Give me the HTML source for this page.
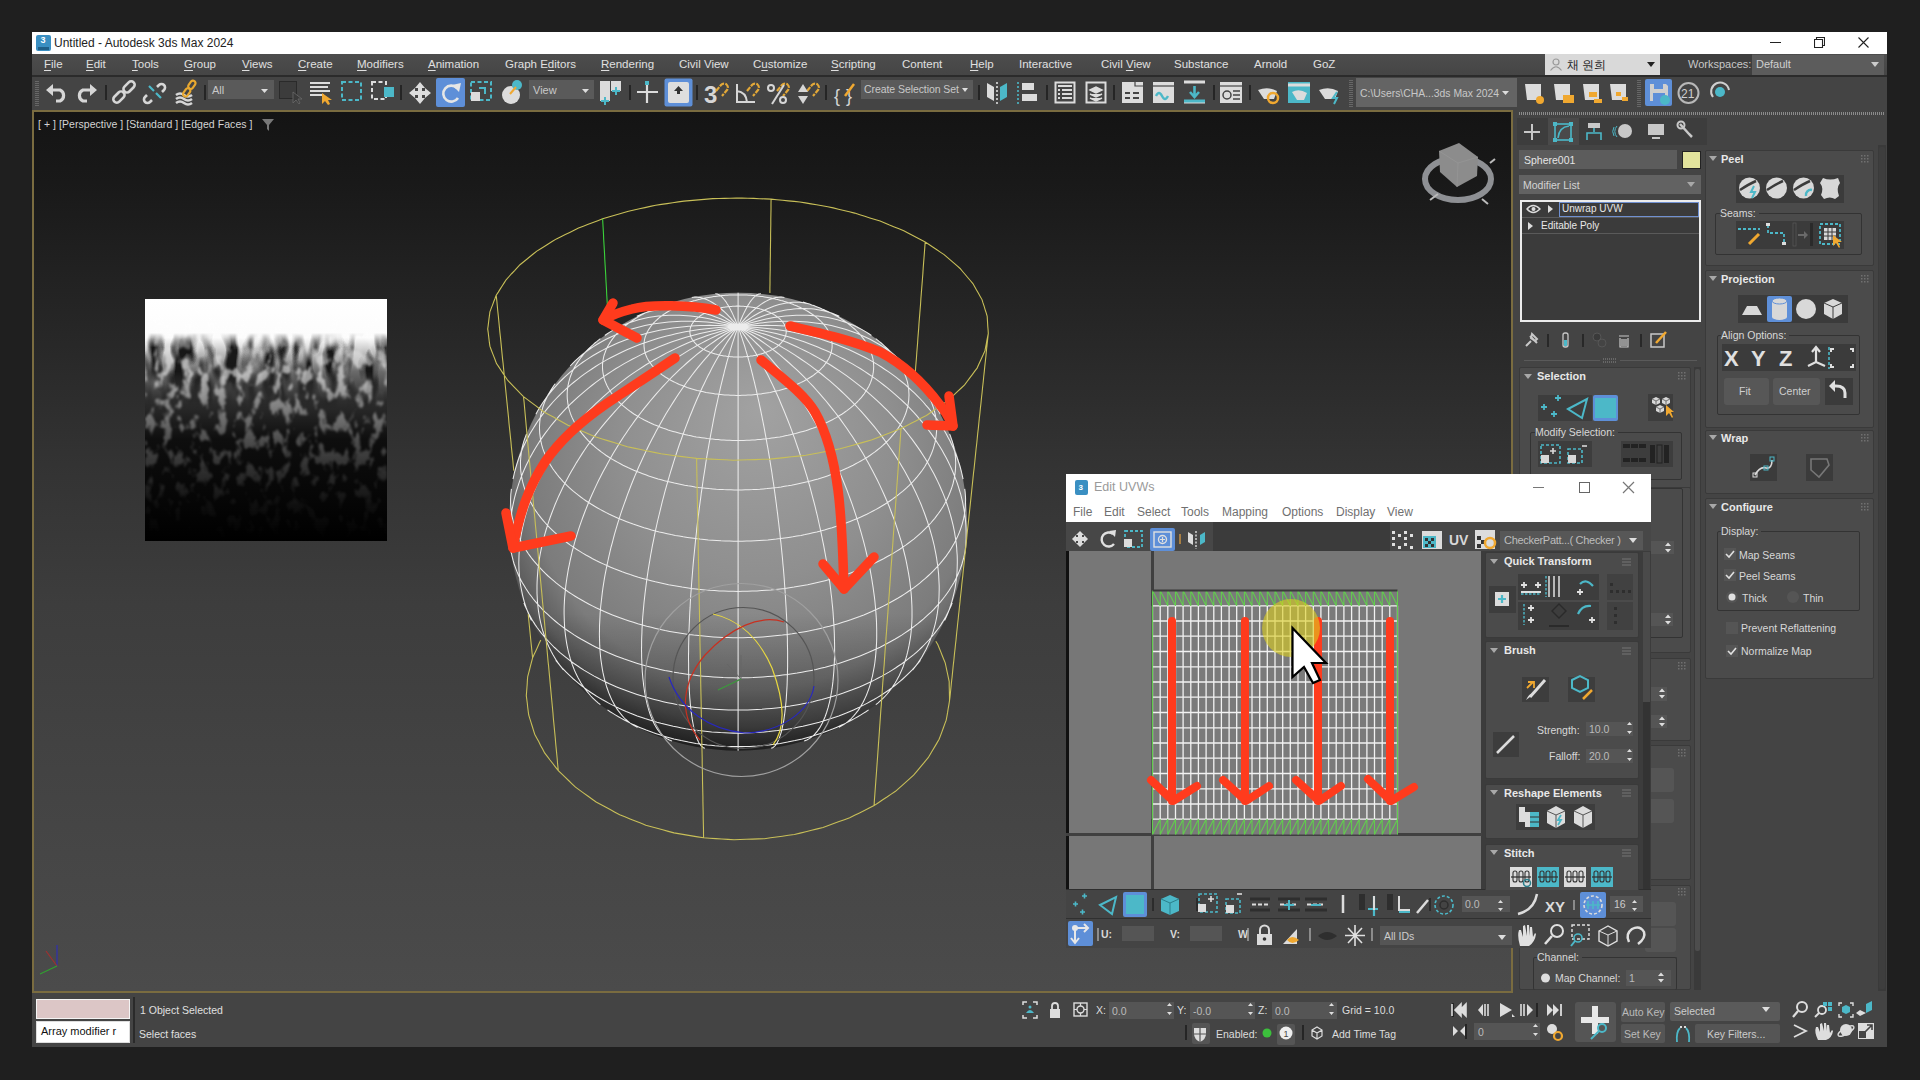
<!DOCTYPE html>
<html><head><meta charset="utf-8">
<style>
*{box-sizing:border-box;margin:0;padding:0}
html,body{width:1920px;height:1080px;overflow:hidden;background:#1f1f1f;font-family:"Liberation Sans",sans-serif;color:#dcdcdc}
.a{position:absolute}
#win{position:absolute;left:32px;top:32px;width:1855px;height:1015px;background:#444}
#title{position:absolute;left:0;top:0;width:1855px;height:22px;background:#fff;color:#222;font-size:12.5px}
#menu{position:absolute;left:0;top:22px;width:1855px;height:21px;background:linear-gradient(#4d4d4d,#454545);font-size:12px;color:#e0e0e0}
#menu span{position:absolute;top:4px;white-space:nowrap;font-size:11.5px}
#menu u{text-underline-offset:2px;text-decoration-thickness:1px}
#tb{position:absolute;left:0;top:44px;width:1855px;height:34px;background:#444}
#vp{position:absolute;left:0;top:78px;width:1481px;height:883px;border:2px solid #7a6c40;background:linear-gradient(#141414 0%,#191919 8%,#333 40%,#3d3d3d 56%,#4b4b4b 100%);overflow:hidden}
#cp{position:absolute;left:1484px;top:78px;width:371px;height:883px;background:#444}
#sb{position:absolute;left:0;top:961px;width:1855px;height:54px;background:#444}
.t{position:absolute;white-space:nowrap}
</style></head><body>
<div id="win">
  <div id="title">
    <div class="a" style="left:4px;top:3px;width:15px;height:16px;background:#3a8fc2;border-radius:2px"></div><div class="t" style="left:8.5px;top:3px;font-size:9px;font-weight:bold;color:#fff">3</div><div class="a" style="left:6px;top:15px;width:11px;height:3px;background:#1f5f88"></div>
    <div class="t" style="left:22px;top:4px;font-size:12px">Untitled - Autodesk 3ds Max 2024</div>
<div class="a" style="left:1738px;top:10px;width:11px;height:1px;background:#222"></div>
<svg class="a" style="left:1782px;top:5px" width="11" height="11"><path d="M0.5 2.5H8.5V10.5H0.5Z M2.5 2.5V0.5H10.5V8.5H8.5" fill="none" stroke="#222" stroke-width="1.1"/></svg>
<svg class="a" style="left:1826px;top:5px" width="11" height="11"><path d="M0.5 0.5L10.5 10.5M10.5 0.5L0.5 10.5" stroke="#222" stroke-width="1.1"/></svg>
  </div>
  <div id="menu">
    <span style="left:12px"><u>F</u>ile</span><span style="left:54px"><u>E</u>dit</span><span style="left:100px"><u>T</u>ools</span><span style="left:152px"><u>G</u>roup</span><span style="left:210px"><u>V</u>iews</span><span style="left:266px"><u>C</u>reate</span><span style="left:325px"><u>M</u>odifiers</span><span style="left:396px"><u>A</u>nimation</span><span style="left:473px">Graph E<u>d</u>itors</span><span style="left:569px"><u>R</u>endering</span><span style="left:647px">Civil View</span><span style="left:721px">C<u>u</u>stomize</span><span style="left:799px"><u>S</u>cripting</span><span style="left:870px">Content</span><span style="left:938px"><u>H</u>elp</span><span style="left:987px">Interactive</span><span style="left:1069px">Civil <u>V</u>iew</span><span style="left:1142px">Substance</span><span style="left:1222px">Arnold</span><span style="left:1281px">GoZ</span><div class="a" style="left:1513px;top:0;width:115px;height:21px;background:#d9d9d9"></div>
<svg class="a" style="left:1517px;top:3px" width="14" height="14"><circle cx="7" cy="5" r="3" fill="none" stroke="#999" stroke-width="1.2"/><path d="M1.5 13.5 Q7 6 12.5 13.5" fill="none" stroke="#999" stroke-width="1.2"/></svg>
<div class="t" style="left:1535px;top:3px;font-size:12px;color:#222;letter-spacing:0px">&#52292; &#50896;&#55148;</div>
<svg class="a" style="left:1615px;top:8px" width="8" height="6"><path d="M0 0H8L4 5Z" fill="#222"/></svg>
<div class="a" style="left:1628px;top:0;width:92px;height:21px;background:#3e3e3e"></div>
<div class="t" style="left:1656px;top:4px;font-size:11px;color:#c8c8c8">Workspaces:</div>
<div class="a" style="left:1720px;top:1px;width:132px;height:20px;background:#5c5c5c"></div>
<div class="t" style="left:1724px;top:4px;font-size:11px;color:#d0d0d0">Default</div>
<svg class="a" style="left:1839px;top:8px" width="8" height="6"><path d="M0 0H8L4 5Z" fill="#ccc"/></svg>
  </div>
  <div id="tb"></div>
  <div id="tbline" class="a" style="left:0;top:43px;width:1855px;height:2px;background:#2b2b2b"></div>
  <div id="vp">
<svg class="a" style="left:0;top:0" width="1477" height="879" viewBox="34 112 1477 879">
<defs>
<radialGradient id="sg" cx="0.53" cy="0.4" r="0.6" fx="0.55" fy="0.25">
<stop offset="0" stop-color="#a2a2a2"/><stop offset="0.5" stop-color="#8f8f8f"/><stop offset="0.82" stop-color="#7c7c7c"/><stop offset="0.93" stop-color="#5e5e5e"/><stop offset="1" stop-color="#3c3c3c"/>
</radialGradient>
<linearGradient id="sg2" x1="0" y1="0" x2="0" y2="1">
<stop offset="0" stop-color="#000" stop-opacity="0"/><stop offset="0.7" stop-color="#000" stop-opacity="0"/><stop offset="0.93" stop-color="#000" stop-opacity="0.35"/><stop offset="1" stop-color="#000" stop-opacity="0.5"/>
</linearGradient>
<linearGradient id="tg" x1="0" y1="0" x2="0" y2="1">
<stop offset="0" stop-color="#fff"/><stop offset="0.16" stop-color="#fcfcfc"/><stop offset="0.22" stop-color="#c0c0c0"/><stop offset="0.3" stop-color="#6a6a6a"/><stop offset="0.42" stop-color="#2e2e2e"/><stop offset="0.58" stop-color="#0e0e0e"/><stop offset="1" stop-color="#000"/>
</linearGradient>
<linearGradient id="wg" x1="0" y1="0" x2="0" y2="1">
<stop offset="0" stop-color="#fff" stop-opacity="0"/><stop offset="0.18" stop-color="#fff" stop-opacity="0.3"/><stop offset="0.3" stop-color="#fff" stop-opacity="0.65"/><stop offset="0.45" stop-color="#fff" stop-opacity="0.45"/><stop offset="0.65" stop-color="#fff" stop-opacity="0.22"/><stop offset="0.85" stop-color="#fff" stop-opacity="0.05"/><stop offset="1" stop-color="#fff" stop-opacity="0"/>
</linearGradient>
<linearGradient id="dg" x1="0" y1="0" x2="0" y2="1">
<stop offset="0" stop-color="#000" stop-opacity="0"/><stop offset="0.14" stop-color="#000" stop-opacity="0"/><stop offset="0.2" stop-color="#000" stop-opacity="0.9"/><stop offset="0.3" stop-color="#000" stop-opacity="0.8"/><stop offset="0.45" stop-color="#000" stop-opacity="0"/>
</linearGradient>
<filter id="noise" x="0" y="0" width="1" height="1" color-interpolation-filters="sRGB">
<feTurbulence type="fractalNoise" baseFrequency="0.11 0.06" numOctaves="3" seed="11" result="n"/>
<feColorMatrix in="n" type="matrix" values="0 0 0 0 1  0 0 0 0 1  0 0 0 0 1  8 0 0 0 -4.2" result="m"/>
<feGaussianBlur in="m" stdDeviation="1" result="mb"/>
<feComposite in="mb" in2="SourceGraphic" operator="in"/>
</filter>
<filter id="noise2" x="0" y="0" width="1" height="1" color-interpolation-filters="sRGB">
<feTurbulence type="fractalNoise" baseFrequency="0.08 0.03" numOctaves="2" seed="4" result="n"/>
<feColorMatrix in="n" type="matrix" values="0 0 0 0 0  0 0 0 0 0  0 0 0 0 0  4 0 0 0 -1.6" result="m"/>
<feComposite in="m" in2="SourceGraphic" operator="in"/>
</filter>
</defs>

<g>
<rect x="145" y="299" width="242" height="242" fill="url(#tg)"/>
<rect x="145" y="299" width="242" height="242" fill="url(#dg)" filter="url(#noise2)"/>
<rect x="145" y="299" width="242" height="242" fill="url(#wg)" filter="url(#noise)" opacity="0.9"/>
</g>
<circle cx="738.1" cy="521.7" r="229.0" fill="url(#sg)"/>
<circle cx="738.1" cy="521.7" r="229.0" fill="url(#sg2)"/>
<path d="M786.2 331.0 L786.2 330.5 L786.1 330.0 L786.1 329.5 L786.0 329.0 L785.9 328.5 L785.8 328.0 L785.6 327.5 L785.5 327.0 L785.3 326.5 L785.1 326.1 L784.9 325.6 L784.6 325.1 L784.4 324.6 L784.1 324.1 L783.9 323.7 L783.6 323.2 L783.2 322.7 L782.9 322.3 L782.5 321.8 L782.2 321.3 L781.8 320.9 L781.4 320.5 L781.0 320.0 L780.5 319.6 L780.1 319.1 L779.6 318.7 L779.2 318.3 L778.7 317.9 L778.1 317.5 L777.6 317.0 L777.1 316.6 L776.5 316.2 L776.0 315.9 L775.4 315.5 L774.8 315.1 L774.2 314.7 L773.5 314.4 L772.9 314.0 L772.3 313.6 L771.6 313.3 L770.9 313.0 L770.2 312.6 L769.5 312.3 L768.8 312.0 L768.1 311.7 L767.4 311.4 L766.6 311.1 L765.9 310.8 L765.1 310.5 L764.3 310.2 L763.6 310.0 L762.8 309.7 L762.0 309.5 L761.2 309.2 L760.3 309.0 L759.5 308.8 L758.7 308.6 L757.8 308.4 L757.0 308.2 L756.1 308.0 L755.3 307.8 L754.4 307.6 L753.5 307.5 L752.6 307.3 L751.8 307.2 L750.9 307.0 L750.0 306.9 L749.1 306.8 L748.2 306.7 L747.3 306.6 L746.4 306.5 L745.4 306.4 L744.5 306.4 L743.6 306.3 L742.7 306.2 L741.8 306.2 L740.8 306.2 L739.9 306.1 L739.0 306.1 L738.1 306.1 L737.1 306.1 L736.2 306.1 L735.3 306.2 L734.4 306.2 L733.5 306.2 L732.5 306.3 L731.6 306.4 L730.7 306.4 L729.8 306.5 L728.9 306.6 L728.0 306.7 L727.1 306.8 L726.2 306.9 L725.3 307.0 L724.4 307.2 L723.5 307.3 L722.6 307.5 L721.7 307.6 L720.9 307.8 L720.0 308.0 L719.2 308.2 L718.3 308.4 L717.5 308.6 L716.6 308.8 L715.8 309.0 L715.0 309.2 L714.2 309.5 L713.4 309.7 L712.6 310.0 L711.8 310.2 L711.0 310.5 L710.3 310.8 L709.5 311.1 L708.8 311.4 L708.0 311.7 L707.3 312.0 L706.6 312.3 L705.9 312.6 L705.2 313.0 L704.6 313.3 L703.9 313.6 L703.2 314.0 L702.6 314.4 L702.0 314.7 L701.4 315.1 L700.8 315.5 L700.2 315.9 L699.6 316.2 L699.1 316.6 L698.5 317.0 L698.0 317.5 L697.5 317.9 L697.0 318.3 L696.5 318.7 L696.0 319.1 L695.6 319.6 L695.2 320.0 L694.7 320.5 L694.3 320.9 L694.0 321.3 L693.6 321.8 L693.2 322.3 L692.9 322.7 L692.6 323.2 L692.3 323.7 L692.0 324.1 L691.7 324.6 L691.5 325.1 L691.3 325.6 L691.1 326.1 L690.9 326.5 L690.7 327.0 L690.5 327.5 L690.4 328.0 L690.3 328.5 L690.2 329.0 L690.1 329.5 L690.0 330.0 L690.0 330.5 L689.9 331.0 L689.9 331.5 L689.9 332.0 L689.9 332.5 L690.0 333.0 L690.0 333.5 L690.1 334.0 L690.2 334.5 L690.3 335.0 L690.5 335.5 L690.6 336.0 L690.8 336.5 L691.0 337.0 L691.2 337.5 L691.4 337.9 L691.7 338.4 L692.0 338.9 L692.2 339.4 L692.5 339.9 L692.9 340.3 L693.2 340.8 L693.6 341.3 L693.9 341.7 L694.3 342.2 L694.7 342.7 L695.2 343.1 L695.6 343.6 L696.1 344.0 L696.5 344.4 L697.0 344.9 L697.5 345.3 L698.1 345.7 L698.6 346.1 L699.2 346.6 L699.7 347.0 L700.3 347.4 L700.9 347.8 L701.5 348.1 L702.2 348.5 L702.8 348.9 L703.5 349.3 L704.2 349.6 L704.8 350.0 L705.5 350.3 L706.3 350.7 L707.0 351.0 L707.7 351.3 L708.5 351.6 L709.3 351.9 L710.0 352.2 L710.8 352.5 L711.6 352.8 L712.4 353.1 L713.2 353.4 L714.1 353.6 L714.9 353.9 L715.8 354.1 L716.6 354.3 L717.5 354.6 L718.4 354.8 L719.3 355.0 L720.2 355.2 L721.1 355.4 L722.0 355.5 L722.9 355.7 L723.8 355.9 L724.7 356.0 L725.6 356.1 L726.6 356.3 L727.5 356.4 L728.5 356.5 L729.4 356.6 L730.4 356.7 L731.3 356.8 L732.3 356.8 L733.2 356.9 L734.2 356.9 L735.2 357.0 L736.1 357.0 L737.1 357.0 L738.1 357.0 L739.0 357.0 L740.0 357.0 L741.0 357.0 L741.9 356.9 L742.9 356.9 L743.9 356.8 L744.8 356.8 L745.8 356.7 L746.7 356.6 L747.7 356.5 L748.6 356.4 L749.6 356.3 L750.5 356.1 L751.4 356.0 L752.4 355.9 L753.3 355.7 L754.2 355.5 L755.1 355.4 L756.0 355.2 L756.9 355.0 L757.8 354.8 L758.6 354.6 L759.5 354.3 L760.4 354.1 L761.2 353.9 L762.1 353.6 L762.9 353.4 L763.7 353.1 L764.5 352.8 L765.3 352.5 L766.1 352.2 L766.9 351.9 L767.7 351.6 L768.4 351.3 L769.2 351.0 L769.9 350.7 L770.6 350.3 L771.3 350.0 L772.0 349.6 L772.7 349.3 L773.3 348.9 L774.0 348.5 L774.6 348.1 L775.2 347.8 L775.8 347.4 L776.4 347.0 L777.0 346.6 L777.5 346.1 L778.1 345.7 L778.6 345.3 L779.1 344.9 L779.6 344.4 L780.1 344.0 L780.5 343.6 L781.0 343.1 L781.4 342.7 L781.8 342.2 L782.2 341.7 L782.6 341.3 L782.9 340.8 L783.3 340.3 L783.6 339.9 L783.9 339.4 L784.2 338.9 L784.4 338.4 L784.7 337.9 L784.9 337.5 L785.1 337.0 L785.3 336.5 L785.5 336.0 L785.7 335.5 L785.8 335.0 L785.9 334.5 L786.0 334.0 L786.1 333.5 L786.2 333.0 L786.2 332.5 L786.2 332.0 L786.2 331.5 L786.2 331.0M832.0 343.0 L831.9 342.0 L831.8 341.0 L831.6 340.0 L831.4 339.0 L831.2 338.1 L830.9 337.1 L830.6 336.1 L830.3 335.2 L829.9 334.2 L829.5 333.3 L829.0 332.3 L828.5 331.4 L828.0 330.4 L827.5 329.5 L826.9 328.6 L826.3 327.7 L825.6 326.8 L824.9 325.9 L824.2 325.0 L823.5 324.1 L822.7 323.2 L821.9 322.3 L821.1 321.5 L820.2 320.6 L819.3 319.8 L818.4 319.0 L817.4 318.2 L816.4 317.3 L815.4 316.5 L814.4 315.8 L813.3 315.0 L812.2 314.2 L811.1 313.5 L809.9 312.7 L808.8 312.0 L807.6 311.3 L806.4 310.6 L805.1 309.9 L803.8 309.2 L802.5 308.6 L801.2 307.9 L799.9 307.3 L798.5 306.7 L797.2 306.1 L795.8 305.5 L794.3 304.9 L792.9 304.3 L791.4 303.8 L790.0 303.2 L788.5 302.7 L787.0 302.2 L785.4 301.7 L783.9 301.3 L782.3 300.8 L780.7 300.4 L779.1 299.9 L777.5 299.5 L775.9 299.2 L774.3 298.8 L772.6 298.4 L771.0 298.1 L769.3 297.8 L767.6 297.5 L766.0 297.2 L764.3 296.9 L762.6 296.6 L760.8 296.4 L759.1 296.2 L757.4 296.0 L755.7 295.8 L753.9 295.6 L752.2 295.5 L750.4 295.3 L748.7 295.2 L746.9 295.1 L745.1 295.0 L743.4 295.0 L741.6 294.9 L739.8 294.9 L738.1 294.9 L736.3 294.9 L734.5 294.9 L732.8 295.0 L731.0 295.0 L729.2 295.1 L727.5 295.2 L725.7 295.3 L724.0 295.5 L722.2 295.6 L720.5 295.8 L718.7 296.0 L717.0 296.2 L715.3 296.4 L713.6 296.6 L711.9 296.9 L710.2 297.2 L708.5 297.5 L706.8 297.8 L705.1 298.1 L703.5 298.4 L701.8 298.8 L700.2 299.2 L698.6 299.5 L697.0 299.9 L695.4 300.4 L693.8 300.8 L692.3 301.3 L690.7 301.7 L689.2 302.2 L687.7 302.7 L686.2 303.2 L684.7 303.8 L683.2 304.3 L681.8 304.9 L680.4 305.5 L679.0 306.1 L677.6 306.7 L676.2 307.3 L674.9 307.9 L673.6 308.6 L672.3 309.2 L671.0 309.9 L669.8 310.6 L668.6 311.3 L667.4 312.0 L666.2 312.7 L665.1 313.5 L663.9 314.2 L662.8 315.0 L661.8 315.8 L660.7 316.5 L659.7 317.3 L658.7 318.2 L657.8 319.0 L656.9 319.8 L656.0 320.6 L655.1 321.5 L654.3 322.3 L653.4 323.2 L652.7 324.1 L651.9 325.0 L651.2 325.9 L650.5 326.8 L649.9 327.7 L649.3 328.6 L648.7 329.5 L648.1 330.4 L647.6 331.4 L647.1 332.3 L646.7 333.3 L646.3 334.2 L645.9 335.2 L645.5 336.1 L645.2 337.1 L644.9 338.1 L644.7 339.0 L644.5 340.0 L644.3 341.0 L644.2 342.0 L644.1 343.0 L644.0 344.0 L644.0 344.9 L644.0 345.9 L644.1 346.9 L644.2 347.9 L644.3 348.9 L644.4 349.9 L644.6 350.9 L644.9 351.8 L645.1 352.8 L645.4 353.8 L645.8 354.8 L646.1 355.8 L646.6 356.7 L647.0 357.7 L647.5 358.7 L648.0 359.6 L648.6 360.6 L649.2 361.5 L649.8 362.5 L650.5 363.4 L651.2 364.3 L651.9 365.3 L652.7 366.2 L653.5 367.1 L654.3 368.0 L655.2 368.9 L656.1 369.8 L657.0 370.6 L658.0 371.5 L659.0 372.4 L660.1 373.2 L661.1 374.0 L662.2 374.9 L663.4 375.7 L664.5 376.5 L665.7 377.3 L667.0 378.0 L668.2 378.8 L669.5 379.5 L670.8 380.3 L672.2 381.0 L673.6 381.7 L675.0 382.4 L676.4 383.1 L677.8 383.7 L679.3 384.4 L680.8 385.0 L682.4 385.6 L683.9 386.2 L685.5 386.8 L687.1 387.4 L688.7 387.9 L690.4 388.4 L692.0 388.9 L693.7 389.4 L695.4 389.9 L697.1 390.4 L698.9 390.8 L700.6 391.2 L702.4 391.6 L704.2 392.0 L706.0 392.4 L707.8 392.7 L709.6 393.0 L711.5 393.3 L713.3 393.6 L715.2 393.9 L717.0 394.1 L718.9 394.3 L720.8 394.5 L722.7 394.7 L724.6 394.9 L726.5 395.0 L728.4 395.1 L730.4 395.2 L732.3 395.3 L734.2 395.3 L736.1 395.4 L738.1 395.4 L740.0 395.4 L741.9 395.3 L743.9 395.3 L745.8 395.2 L747.7 395.1 L749.6 395.0 L751.5 394.9 L753.4 394.7 L755.3 394.5 L757.2 394.3 L759.1 394.1 L761.0 393.9 L762.8 393.6 L764.7 393.3 L766.5 393.0 L768.4 392.7 L770.2 392.4 L772.0 392.0 L773.8 391.6 L775.5 391.2 L777.3 390.8 L779.0 390.4 L780.7 389.9 L782.4 389.4 L784.1 388.9 L785.8 388.4 L787.4 387.9 L789.1 387.4 L790.7 386.8 L792.2 386.2 L793.8 385.6 L795.3 385.0 L796.8 384.4 L798.3 383.7 L799.8 383.1 L801.2 382.4 L802.6 381.7 L804.0 381.0 L805.3 380.3 L806.6 379.5 L807.9 378.8 L809.2 378.0 L810.4 377.3 L811.6 376.5 L812.8 375.7 L813.9 374.9 L815.0 374.0 L816.1 373.2 L817.1 372.4 L818.1 371.5 L819.1 370.6 L820.1 369.8 L821.0 368.9 L821.8 368.0 L822.7 367.1 L823.5 366.2 L824.3 365.3 L825.0 364.3 L825.7 363.4 L826.4 362.5 L827.0 361.5 L827.6 360.6 L828.1 359.6 L828.7 358.7 L829.1 357.7 L829.6 356.7 L830.0 355.8 L830.4 354.8 L830.7 353.8 L831.0 352.8 L831.3 351.8 L831.5 350.9 L831.7 349.9 L831.9 348.9 L832.0 347.9 L832.1 346.9 L832.1 345.9 L832.1 344.9 L832.1 344.0 L832.0 343.0M873.4 362.1 L873.2 360.7 L873.0 359.3 L872.7 357.8 L872.3 356.4 L871.9 355.0 L871.5 353.6 L871.0 352.2 L870.4 350.8 L869.8 349.4 L869.2 348.0 L868.5 346.6 L867.8 345.3 L867.0 343.9 L866.1 342.6 L865.3 341.2 L864.3 339.9 L863.4 338.6 L862.3 337.3 L861.3 336.0 L860.2 334.7 L859.0 333.4 L857.8 332.2 L856.6 331.0 L855.3 329.7 L854.0 328.5 L852.6 327.3 L851.2 326.2 L849.8 325.0 L848.3 323.9 L846.8 322.7 L845.3 321.6 L843.7 320.5 L842.0 319.5 L840.4 318.4 L838.7 317.4 L837.0 316.3 L835.2 315.3 L833.4 314.3 L831.6 313.4 L829.7 312.4 L827.8 311.5 L825.9 310.6 L824.0 309.7 L822.0 308.9 L820.0 308.0 L817.9 307.2 L815.9 306.4 L813.8 305.6 L811.7 304.9 L809.5 304.1 L807.4 303.4 L805.2 302.7 L803.0 302.1M673.1 302.1 L670.9 302.7 L668.8 303.4 L666.6 304.1 L664.5 304.9 L662.4 305.6 L660.3 306.4 L658.2 307.2 L656.2 308.0 L654.2 308.9 L652.2 309.7 L650.2 310.6 L648.3 311.5 L646.4 312.4 L644.6 313.4 L642.7 314.3 L640.9 315.3 L639.2 316.3 L637.4 317.4 L635.8 318.4 L634.1 319.5 L632.5 320.5 L630.9 321.6 L629.3 322.7 L627.8 323.9 L626.3 325.0 L624.9 326.2 L623.5 327.3 L622.1 328.5 L620.8 329.7 L619.5 331.0 L618.3 332.2 L617.1 333.4 L616.0 334.7 L614.9 336.0 L613.8 337.3 L612.8 338.6 L611.8 339.9 L610.9 341.2 L610.0 342.6 L609.2 343.9 L608.4 345.3 L607.6 346.6 L606.9 348.0 L606.3 349.4 L605.7 350.8 L605.2 352.2 L604.7 353.6 L604.2 355.0 L603.8 356.4 L603.5 357.8 L603.2 359.3 L602.9 360.7 L602.8 362.1 L602.6 363.6 L602.5 365.0 L602.5 366.5 L602.5 367.9 L602.6 369.4 L602.7 370.8 L602.9 372.3 L603.1 373.7 L603.4 375.2 L603.7 376.6 L604.1 378.1 L604.5 379.5 L605.0 381.0 L605.6 382.4 L606.2 383.8 L606.8 385.3 L607.6 386.7 L608.3 388.1 L609.1 389.5 L610.0 390.9 L610.9 392.3 L611.9 393.7 L612.9 395.1 L614.0 396.4 L615.1 397.8 L616.3 399.1 L617.5 400.5 L618.8 401.8 L620.1 403.1 L621.5 404.4 L622.9 405.7 L624.4 406.9 L626.0 408.2 L627.5 409.4 L629.2 410.6 L630.8 411.8 L632.5 413.0 L634.3 414.2 L636.1 415.3 L638.0 416.4 L639.9 417.6 L641.8 418.6 L643.8 419.7 L645.8 420.7 L647.9 421.8 L650.0 422.8 L652.1 423.7 L654.3 424.7 L656.5 425.6 L658.8 426.5 L661.1 427.4 L663.4 428.3 L665.8 429.1 L668.1 429.9 L670.6 430.7 L673.0 431.4 L675.5 432.1 L678.0 432.8 L680.6 433.5 L683.1 434.1 L685.7 434.7 L688.3 435.3 L691.0 435.8 L693.6 436.4 L696.3 436.9 L699.0 437.3 L701.7 437.7 L704.4 438.1 L707.2 438.5 L710.0 438.8 L712.7 439.1 L715.5 439.4 L718.3 439.6 L721.1 439.9 L723.9 440.0 L726.8 440.2 L729.6 440.3 L732.4 440.4 L735.2 440.4 L738.1 440.4 L740.9 440.4 L743.7 440.4 L746.6 440.3 L749.4 440.2 L752.2 440.0 L755.0 439.9 L757.8 439.6 L760.6 439.4 L763.4 439.1 L766.2 438.8 L769.0 438.5 L771.7 438.1 L774.4 437.7 L777.1 437.3 L779.8 436.9 L782.5 436.4 L785.2 435.8 L787.8 435.3 L790.4 434.7 L793.0 434.1 L795.6 433.5 L798.1 432.8 L800.6 432.1 L803.1 431.4 L805.6 430.7 L808.0 429.9 L810.4 429.1 L812.7 428.3 L815.1 427.4 L817.4 426.5 L819.6 425.6 L821.8 424.7 L824.0 423.7 L826.2 422.8 L828.3 421.8 L830.3 420.7 L832.4 419.7 L834.3 418.6 L836.3 417.6 L838.2 416.4 L840.0 415.3 L841.8 414.2 L843.6 413.0 L845.3 411.8 L847.0 410.6 L848.6 409.4 L850.2 408.2 L851.7 406.9 L853.2 405.7 L854.6 404.4 L856.0 403.1 L857.3 401.8 L858.6 400.5 L859.8 399.1 L861.0 397.8 L862.2 396.4 L863.2 395.1 L864.3 393.7 L865.2 392.3 L866.1 390.9 L867.0 389.5 L867.8 388.1 L868.6 386.7 L869.3 385.3 L870.0 383.8 L870.6 382.4 L871.1 381.0 L871.6 379.5 L872.0 378.1 L872.4 376.6 L872.8 375.2 L873.0 373.7 L873.3 372.3 L873.4 370.8 L873.6 369.4 L873.6 367.9 L873.7 366.5 L873.6 365.0 L873.5 363.6 L873.4 362.1M908.4 387.5 L908.1 385.6 L907.8 383.8 L907.4 381.9 L906.9 380.1 L906.3 378.3 L905.7 376.5 L905.0 374.7 L904.3 372.9 L903.5 371.1 L902.6 369.3 L901.7 367.6 L900.8 365.8 L899.7 364.1 L898.6 362.4 L897.5 360.7 L896.3 359.0 L895.0 357.3 L893.7 355.7 L892.3 354.0 L890.9 352.4 L889.4 350.8 L887.9 349.2 L886.3 347.6 L884.6 346.1 L883.0 344.6 L881.2 343.0 L879.4 341.6 L877.6 340.1 L875.7 338.6M600.4 338.6 L598.5 340.1 L596.7 341.6 L594.9 343.0 L593.2 344.6 L591.5 346.1 L589.9 347.6 L588.3 349.2 L586.7 350.8 L585.3 352.4 L583.8 354.0 L582.5 355.7 L581.1 357.3 L579.9 359.0 L578.7 360.7 L577.5 362.4 L576.4 364.1 L575.4 365.8 L574.4 367.6 L573.5 369.3 L572.6 371.1 L571.8 372.9 L571.1 374.7 L570.4 376.5 L569.8 378.3 L569.3 380.1 L568.8 381.9 L568.4 383.8 L568.0 385.6 L567.7 387.5 L567.5 389.3 L567.3 391.2 L567.2 393.1 L567.2 394.9 L567.2 396.8 L567.3 398.7 L567.5 400.5 L567.7 402.4 L568.0 404.3 L568.4 406.2 L568.8 408.1 L569.3 409.9 L569.9 411.8 L570.5 413.7 L571.2 415.5 L572.0 417.4 L572.9 419.2 L573.8 421.1 L574.7 422.9 L575.8 424.7 L576.9 426.5 L578.1 428.3 L579.3 430.1 L580.7 431.9 L582.0 433.7 L583.5 435.4 L585.0 437.2 L586.6 438.9 L588.2 440.6 L590.0 442.3 L591.7 444.0 L593.6 445.7 L595.5 447.3 L597.4 448.9 L599.5 450.5 L601.6 452.1 L603.7 453.6 L605.9 455.2 L608.2 456.7 L610.5 458.2 L612.9 459.6 L615.3 461.0 L617.8 462.4 L620.4 463.8 L623.0 465.2 L625.7 466.5 L628.4 467.8 L631.1 469.0 L633.9 470.3 L636.8 471.5 L639.7 472.6 L642.7 473.7 L645.7 474.8 L648.7 475.9 L651.8 476.9 L654.9 477.9 L658.1 478.9 L661.3 479.8 L664.5 480.7 L667.8 481.5 L671.1 482.3 L674.4 483.1 L677.8 483.8 L681.2 484.5 L684.6 485.2 L688.0 485.8 L691.5 486.3 L695.0 486.9 L698.5 487.4 L702.1 487.8 L705.6 488.2 L709.2 488.6 L712.8 488.9 L716.4 489.2 L720.0 489.4 L723.6 489.6 L727.2 489.7 L730.8 489.8 L734.4 489.9 L738.1 489.9 L741.7 489.9 L745.3 489.8 L749.0 489.7 L752.6 489.6 L756.2 489.4 L759.8 489.2 L763.4 488.9 L767.0 488.6 L770.5 488.2 L774.1 487.8 L777.6 487.4 L781.1 486.9 L784.6 486.3 L788.1 485.8 L791.5 485.2 L795.0 484.5 L798.4 483.8 L801.7 483.1 L805.1 482.3 L808.4 481.5 L811.6 480.7 L814.9 479.8 L818.1 478.9 L821.2 477.9 L824.4 476.9 L827.4 475.9 L830.5 474.8 L833.5 473.7 L836.4 472.6 L839.3 471.5 L842.2 470.3 L845.0 469.0 L847.8 467.8 L850.5 466.5 L853.1 465.2 L855.7 463.8 L858.3 462.4 L860.8 461.0 L863.2 459.6 L865.6 458.2 L868.0 456.7 L870.2 455.2 L872.4 453.6 L874.6 452.1 L876.7 450.5 L878.7 448.9 L880.7 447.3 L882.6 445.7 L884.4 444.0 L886.2 442.3 L887.9 440.6 L889.6 438.9 L891.1 437.2 L892.6 435.4 L894.1 433.7 L895.5 431.9 L896.8 430.1 L898.1 428.3 L899.2 426.5 L900.3 424.7 L901.4 422.9 L902.4 421.1 L903.3 419.2 L904.1 417.4 L904.9 415.5 L905.6 413.7 L906.3 411.8 L906.8 409.9 L907.3 408.1 L907.8 406.2 L908.1 404.3 L908.4 402.4 L908.7 400.5 L908.8 398.7 L908.9 396.8 L909.0 394.9 L908.9 393.1 L908.8 391.2 L908.7 389.3 L908.4 387.5M935.8 417.6 L935.4 415.4 L934.9 413.2 L934.4 411.0 L933.8 408.9 L933.1 406.7 L932.3 404.5 L931.5 402.4 L930.6 400.3 L929.7 398.2 L928.6 396.1 L927.5 394.0 L926.3 391.9 L925.1 389.9 L923.8 387.9 L922.4 385.8 L921.0 383.8M555.2 383.8 L553.7 385.8 L552.4 387.9 L551.1 389.9 L549.8 391.9 L548.6 394.0 L547.5 396.1 L546.5 398.2 L545.5 400.3 L544.6 402.4 L543.8 404.5 L543.0 406.7 L542.4 408.9 L541.7 411.0 L541.2 413.2 L540.7 415.4 L540.3 417.6 L540.0 419.8 L539.8 422.0 L539.6 424.3 L539.5 426.5 L539.5 428.7 L539.6 430.9 L539.7 433.2 L540.0 435.4 L540.3 437.7 L540.6 439.9 L541.1 442.2 L541.6 444.4 L542.2 446.6 L542.9 448.9 L543.7 451.1 L544.6 453.3 L545.5 455.5 L546.5 457.7 L547.6 459.9 L548.8 462.1 L550.0 464.3 L551.4 466.5 L552.8 468.7 L554.3 470.8 L555.9 472.9 L557.5 475.0 L559.2 477.1 L561.0 479.2 L562.9 481.3 L564.9 483.3 L566.9 485.4 L569.0 487.4 L571.2 489.3 L573.5 491.3 L575.8 493.2 L578.3 495.1 L580.7 497.0 L583.3 498.9 L585.9 500.7 L588.6 502.5 L591.4 504.3 L594.2 506.0 L597.1 507.7 L600.1 509.4 L603.1 511.0 L606.2 512.6 L609.4 514.2 L612.6 515.7 L615.9 517.2 L619.2 518.7 L622.6 520.1 L626.1 521.4 L629.6 522.8 L633.1 524.1 L636.7 525.3 L640.4 526.5 L644.1 527.7 L647.8 528.8 L651.6 529.9 L655.4 530.9 L659.3 531.9 L663.2 532.8 L667.2 533.7 L671.2 534.6 L675.2 535.4 L679.2 536.1 L683.3 536.8 L687.4 537.4 L691.6 538.0 L695.7 538.6 L699.9 539.1 L704.1 539.5 L708.3 539.9 L712.5 540.2 L716.8 540.5 L721.0 540.8 L725.3 541.0 L729.5 541.1 L733.8 541.2 L738.1 541.2 L742.3 541.2 L746.6 541.1 L750.9 541.0 L755.1 540.8 L759.4 540.5 L763.6 540.2 L767.9 539.9 L772.1 539.5 L776.3 539.1 L780.4 538.6 L784.6 538.0 L788.7 537.4 L792.8 536.8 L796.9 536.1 L801.0 535.4 L805.0 534.6 L809.0 533.7 L812.9 532.8 L816.8 531.9 L820.7 530.9 L824.5 529.9 L828.3 528.8 L832.1 527.7 L835.8 526.5 L839.4 525.3 L843.0 524.1 L846.6 522.8 L850.1 521.4 L853.5 520.1 L856.9 518.7 L860.3 517.2 L863.5 515.7 L866.8 514.2 L869.9 512.6 L873.0 511.0 L876.1 509.4 L879.0 507.7 L881.9 506.0 L884.8 504.3 L887.5 502.5 L890.2 500.7 L892.8 498.9 L895.4 497.0 L897.9 495.1 L900.3 493.2 L902.6 491.3 L904.9 489.3 L907.1 487.4 L909.2 485.4 L911.2 483.3 L913.2 481.3 L915.1 479.2 L916.9 477.1 L918.6 475.0 L920.3 472.9 L921.9 470.8 L923.3 468.7 L924.8 466.5 L926.1 464.3 L927.4 462.1 L928.5 459.9 L929.6 457.7 L930.6 455.5 L931.6 453.3 L932.4 451.1 L933.2 448.9 L933.9 446.6 L934.5 444.4 L935.1 442.2 L935.5 439.9 L935.9 437.7 L936.2 435.4 L936.4 433.2 L936.6 430.9 L936.6 428.7 L936.6 426.5 L936.5 424.3 L936.4 422.0 L936.1 419.8 L935.8 417.6M954.6 451.0 L954.1 448.6 L953.6 446.1 L952.9 443.6 L952.2 441.2 L951.4 438.8 L950.6 436.4 L949.6 434.0M526.5 434.0 L525.6 436.4 L524.7 438.8 L523.9 441.2 L523.2 443.6 L522.6 446.1 L522.0 448.6 L521.6 451.0 L521.2 453.5 L520.9 456.0 L520.7 458.5 L520.5 461.0 L520.5 463.5 L520.5 466.1 L520.6 468.6 L520.8 471.1 L521.1 473.6 L521.5 476.2 L522.0 478.7 L522.5 481.2 L523.2 483.8 L523.9 486.3 L524.7 488.8 L525.6 491.3 L526.6 493.8 L527.7 496.3 L528.9 498.8 L530.1 501.3 L531.5 503.8 L532.9 506.2 L534.4 508.7 L536.0 511.1 L537.7 513.5 L539.5 515.9 L541.4 518.3 L543.3 520.7 L545.4 523.0 L547.5 525.3 L549.7 527.6 L552.0 529.9 L554.4 532.2 L556.9 534.4 L559.4 536.6 L562.0 538.8 L564.7 540.9 L567.5 543.0 L570.4 545.1 L573.4 547.1 L576.4 549.2 L579.5 551.1 L582.7 553.1 L585.9 555.0 L589.2 556.8 L592.6 558.7 L596.1 560.5 L599.6 562.2 L603.2 563.9 L606.9 565.6 L610.6 567.2 L614.4 568.8 L618.3 570.3 L622.2 571.8 L626.2 573.2 L630.2 574.6 L634.3 575.9 L638.4 577.2 L642.6 578.4 L646.8 579.6 L651.1 580.7 L655.4 581.8 L659.8 582.8 L664.2 583.8 L668.6 584.7 L673.1 585.5 L677.6 586.3 L682.1 587.1 L686.7 587.7 L691.3 588.4 L695.9 588.9 L700.5 589.4 L705.2 589.9 L709.8 590.3 L714.5 590.6 L719.2 590.9 L723.9 591.1 L728.6 591.2 L733.3 591.3 L738.1 591.4 L742.8 591.3 L747.5 591.2 L752.2 591.1 L756.9 590.9 L761.6 590.6 L766.3 590.3 L771.0 589.9 L775.6 589.4 L780.3 588.9 L784.9 588.4 L789.5 587.7 L794.0 587.1 L798.6 586.3 L803.1 585.5 L807.6 584.7 L812.0 583.8 L816.4 582.8 L820.7 581.8 L825.1 580.7 L829.3 579.6 L833.6 578.4 L837.7 577.2 L841.9 575.9 L846.0 574.6 L850.0 573.2 L853.9 571.8 L857.9 570.3 L861.7 568.8 L865.5 567.2 L869.2 565.6 L872.9 563.9 L876.5 562.2 L880.0 560.5 L883.5 558.7 L886.9 556.8 L890.2 555.0 L893.5 553.1 L896.7 551.1 L899.8 549.2 L902.8 547.1 L905.7 545.1 L908.6 543.0 L911.4 540.9 L914.1 538.8 L916.7 536.6 L919.3 534.4 L921.8 532.2 L924.1 529.9 L926.4 527.6 L928.6 525.3 L930.8 523.0 L932.8 520.7 L934.8 518.3 L936.6 515.9 L938.4 513.5 L940.1 511.1 L941.7 508.7 L943.3 506.2 L944.7 503.8 L946.0 501.3 L947.3 498.8 L948.5 496.3 L949.5 493.8 L950.5 491.3 L951.4 488.8 L952.2 486.3 L953.0 483.8 L953.6 481.2 L954.2 478.7 L954.6 476.2 L955.0 473.6 L955.3 471.1 L955.5 468.6 L955.6 466.1 L955.7 463.5 L955.6 461.0 L955.5 458.5 L955.3 456.0 L955.0 453.5 L954.6 451.0M511.4 488.9 L511.1 491.6 L510.8 494.3 L510.7 497.0 L510.6 499.7 L510.6 502.4 L510.7 505.1 L510.9 507.8 L511.2 510.5 L511.6 513.2 L512.0 516.0 L512.6 518.7 L513.2 521.4 L514.0 524.1 L514.8 526.8 L515.7 529.6 L516.7 532.3 L517.9 534.9 L519.1 537.6 L520.4 540.3 L521.7 543.0 L523.2 545.6 L524.8 548.3 L526.5 550.9 L528.2 553.5 L530.1 556.1 L532.0 558.7 L534.0 561.2 L536.2 563.7 L538.4 566.2 L540.7 568.7 L543.1 571.2 L545.6 573.6 L548.1 576.0 L550.8 578.4 L553.5 580.7 L556.4 583.1 L559.3 585.3 L562.3 587.6 L565.4 589.8 L568.5 592.0 L571.8 594.1 L575.1 596.2 L578.5 598.3 L582.0 600.3 L585.5 602.3 L589.1 604.2 L592.8 606.1 L596.6 608.0 L600.4 609.7 L604.3 611.5 L608.3 613.2 L612.4 614.9 L616.5 616.5 L620.6 618.0 L624.8 619.5 L629.1 620.9 L633.4 622.3 L637.8 623.7 L642.3 624.9 L646.7 626.2 L651.3 627.3 L655.8 628.4 L660.5 629.5 L665.1 630.5 L669.8 631.4 L674.5 632.2 L679.3 633.0 L684.1 633.8 L688.9 634.5 L693.7 635.1 L698.6 635.6 L703.5 636.1 L708.4 636.5 L713.3 636.9 L718.3 637.2 L723.2 637.4 L728.2 637.6 L733.1 637.7 L738.1 637.7 L743.0 637.7 L748.0 637.6 L752.9 637.4 L757.9 637.2 L762.8 636.9 L767.7 636.5 L772.6 636.1 L777.5 635.6 L782.4 635.1 L787.2 634.5 L792.1 633.8 L796.8 633.0 L801.6 632.2 L806.3 631.4 L811.0 630.5 L815.7 629.5 L820.3 628.4 L824.9 627.3 L829.4 626.2 L833.9 624.9 L838.3 623.7 L842.7 622.3 L847.0 620.9 L851.3 619.5 L855.5 618.0 L859.7 616.5 L863.8 614.9 L867.8 613.2 L871.8 611.5 L875.7 609.7 L879.5 608.0 L883.3 606.1 L887.0 604.2 L890.6 602.3 L894.2 600.3 L897.7 598.3 L901.1 596.2 L904.4 594.1 L907.6 592.0 L910.8 589.8 L913.9 587.6 L916.9 585.3 L919.8 583.1 L922.6 580.7 L925.4 578.4 L928.0 576.0 L930.6 573.6 L933.1 571.2 L935.5 568.7 L937.8 566.2 L940.0 563.7 L942.1 561.2 L944.1 558.7 L946.1 556.1 L947.9 553.5 L949.7 550.9 L951.3 548.3 L952.9 545.6 L954.4 543.0 L955.8 540.3 L957.1 537.6 L958.3 534.9 L959.4 532.3 L960.4 529.6 L961.3 526.8 L962.2 524.1 L962.9 521.4 L963.6 518.7 L964.1 516.0 L964.6 513.2 L965.0 510.5 L965.2 507.8 L965.4 505.1 L965.5 502.4 L965.6 499.7 L965.5 497.0 L965.3 494.3 L965.1 491.6 L964.7 488.9M510.4 546.7 L510.8 549.5 L511.3 552.3 L511.8 555.1 L512.5 557.9 L513.2 560.7 L514.0 563.5 L515.0 566.3 L516.0 569.1 L517.1 571.9 L518.3 574.7 L519.6 577.4 L521.0 580.2 L522.5 582.9 L524.1 585.6 L525.7 588.3 L527.5 591.0 L529.3 593.7 L531.3 596.3 L533.3 599.0 L535.5 601.6 L537.7 604.2 L540.0 606.7 L542.4 609.3 L544.9 611.8 L547.5 614.2 L550.1 616.7 L552.9 619.1 L555.7 621.5 L558.6 623.9 L561.6 626.2 L564.7 628.5 L567.9 630.7 L571.2 632.9 L574.5 635.1 L577.9 637.2 L581.4 639.3 L585.0 641.3 L588.6 643.3 L592.3 645.3 L596.1 647.2 L599.9 649.0 L603.9 650.8 L607.8 652.6 L611.9 654.3 L616.0 655.9 L620.2 657.5 L624.4 659.1 L628.7 660.6 L633.1 662.0 L637.5 663.4 L641.9 664.7 L646.4 666.0 L651.0 667.2 L655.5 668.3 L660.2 669.4 L664.8 670.4 L669.6 671.3 L674.3 672.2 L679.1 673.1 L683.9 673.8 L688.7 674.5 L693.6 675.1 L698.5 675.7 L703.4 676.2 L708.3 676.6 L713.2 677.0 L718.2 677.3 L723.1 677.6 L728.1 677.7 L733.1 677.8 L738.1 677.9 L743.0 677.8 L748.0 677.7 L753.0 677.6 L758.0 677.3 L762.9 677.0 L767.8 676.6 L772.8 676.2 L777.7 675.7 L782.6 675.1 L787.4 674.5 L792.3 673.8 L797.1 673.1 L801.8 672.2 L806.6 671.3 L811.3 670.4 L816.0 669.4 L820.6 668.3 L825.2 667.2 L829.7 666.0 L834.2 664.7 L838.7 663.4 L843.1 662.0 L847.4 660.6 L851.7 659.1 L856.0 657.5 L860.1 655.9 L864.2 654.3 L868.3 652.6 L872.3 650.8 L876.2 649.0 L880.1 647.2 L883.8 645.3 L887.5 643.3 L891.2 641.3 L894.8 639.3 L898.2 637.2 L901.7 635.1 L905.0 632.9 L908.2 630.7 L911.4 628.5 L914.5 626.2 L917.5 623.9 L920.4 621.5 L923.3 619.1 L926.0 616.7 L928.7 614.2 L931.3 611.8 L933.8 609.3 L936.2 606.7 L938.5 604.2 L940.7 601.6 L942.8 599.0 L944.9 596.3 L946.8 593.7 L948.7 591.0 L950.4 588.3 L952.1 585.6 L953.7 582.9 L955.1 580.2 L956.5 577.4 L957.8 574.7 L959.0 571.9 L960.2 569.1 L961.2 566.3 L962.1 563.5 L962.9 560.7 L963.7 557.9 L964.3 555.1 L964.9 552.3 L965.3 549.5 L965.7 546.7M523.9 602.9 L525.0 605.7 L526.2 608.4 L527.5 611.1 L528.8 613.8 L530.3 616.5 L531.8 619.2 L533.4 621.9 L535.1 624.6 L536.9 627.2 L538.8 629.8 L540.8 632.4 L542.9 635.0 L545.0 637.5 L547.3 640.0 L549.6 642.5 L552.0 645.0 L554.5 647.5 L557.1 649.9 L559.7 652.3 L562.5 654.6 L565.3 656.9 L568.2 659.2 L571.2 661.5 L574.3 663.7 L577.4 665.8 L580.6 668.0 L583.9 670.1 L587.3 672.1 L590.7 674.1 L594.2 676.1 L597.8 678.0 L601.4 679.9 L605.2 681.7 L608.9 683.5 L612.8 685.2 L616.7 686.9 L620.6 688.5 L624.7 690.1 L628.7 691.6 L632.9 693.1 L637.1 694.5 L641.3 695.8 L645.6 697.1 L649.9 698.3 L654.3 699.5 L658.7 700.6 L663.2 701.7 L667.7 702.7 L672.2 703.6 L676.7 704.5 L681.3 705.3 L686.0 706.1 L690.6 706.8 L695.3 707.4 L700.0 707.9 L704.7 708.4 L709.4 708.8 L714.2 709.2 L719.0 709.5 L723.7 709.7 L728.5 709.9 L733.3 710.0 L738.1 710.0 L742.9 710.0 L747.6 709.9 L752.4 709.7 L757.2 709.5 L762.0 709.2 L766.7 708.8 L771.4 708.4 L776.2 707.9 L780.8 707.4 L785.5 706.8 L790.2 706.1 L794.8 705.3 L799.4 704.5 L804.0 703.6 L808.5 702.7 L813.0 701.7 L817.4 700.6 L821.9 699.5 L826.2 698.3 L830.6 697.1 L834.8 695.8 L839.1 694.5 L843.3 693.1 L847.4 691.6 L851.5 690.1 L855.5 688.5 L859.5 686.9 L863.4 685.2 L867.2 683.5 L871.0 681.7 L874.7 679.9 L878.3 678.0 L881.9 676.1 L885.4 674.1 L888.9 672.1 L892.2 670.1 L895.5 668.0 L898.7 665.8 L901.9 663.7 L904.9 661.5 L907.9 659.2 L910.8 656.9 L913.7 654.6 L916.4 652.3 L919.1 649.9 L921.6 647.5 L924.1 645.0 L926.5 642.5 L928.9 640.0 L931.1 637.5 L933.3 635.0 L935.3 632.4 L937.3 629.8 L939.2 627.2 L941.0 624.6 L942.7 621.9 L944.3 619.2 L945.9 616.5 L947.3 613.8 L948.7 611.1 L949.9 608.4 L951.1 605.7 L952.2 602.9M555.8 660.3 L557.7 662.7 L559.7 665.1 L561.8 667.5 L564.0 669.8 L566.2 672.2 L568.5 674.4 L570.9 676.7 L573.4 679.0 L576.0 681.2 L578.6 683.3 L581.3 685.5 L584.1 687.6 L586.9 689.7 L589.8 691.7 L592.8 693.7 L595.9 695.7 L599.0 697.6 L602.2 699.5 L605.4 701.3 L608.7 703.1 L612.1 704.9 L615.5 706.6 L619.0 708.3 L622.6 709.9 L626.2 711.5 L629.9 713.0 L633.6 714.4 L637.3 715.9 L641.2 717.2 L645.0 718.6 L648.9 719.8 L652.9 721.0 L656.9 722.2 L660.9 723.3 L665.0 724.3 L669.1 725.3 L673.2 726.3 L677.4 727.1 L681.6 727.9 L685.8 728.7 L690.1 729.4 L694.4 730.0 L698.7 730.6 L703.0 731.1 L707.4 731.6 L711.7 732.0 L716.1 732.3 L720.5 732.6 L724.9 732.8 L729.3 733.0 L733.7 733.1 L738.1 733.1 L742.5 733.1 L746.9 733.0 L751.3 732.8 L755.7 732.6 L760.1 732.3 L764.4 732.0 L768.8 731.6 L773.1 731.1 L777.5 730.6 L781.8 730.0 L786.0 729.4 L790.3 728.7 L794.5 727.9 L798.7 727.1 L802.9 726.3 L807.1 725.3 L811.2 724.3 L815.2 723.3 L819.3 722.2 L823.3 721.0 L827.2 719.8 L831.1 718.6 L835.0 717.2 L838.8 715.9 L842.6 714.4 L846.3 713.0 L849.9 711.5 L853.6 709.9 L857.1 708.3 L860.6 706.6 L864.0 704.9 L867.4 703.1 L870.7 701.3 L874.0 699.5 L877.2 697.6 L880.3 695.7 L883.3 693.7 L886.3 691.7 L889.2 689.7 L892.1 687.6 L894.8 685.5 L897.5 683.3 L900.2 681.2 L902.7 679.0 L905.2 676.7 L907.6 674.4 L909.9 672.2 L912.2 669.8 L914.3 667.5 L916.4 665.1 L918.5 662.7 L920.4 660.3M607.5 709.9 L610.2 711.7 L612.9 713.4 L615.7 715.1 L618.5 716.8 L621.4 718.4 L624.3 720.0 L627.3 721.6 L630.3 723.1 L633.4 724.6 L636.5 726.0 L639.7 727.4 L643.0 728.8 L646.2 730.1 L649.5 731.3 L652.9 732.6 L656.3 733.7 L659.8 734.8 L663.2 735.9 L666.7 736.9 L670.3 737.9 L673.9 738.9 L677.5 739.7 L681.1 740.6 L684.8 741.3 L688.5 742.1 L692.2 742.7 L696.0 743.4 L699.7 743.9 L703.5 744.4 L707.3 744.9 L711.1 745.3 L714.9 745.7 L718.8 746.0 L722.6 746.2 L726.5 746.4 L730.3 746.5 L734.2 746.6 L738.1 746.6 L741.9 746.6 L745.8 746.5 L749.7 746.4 L753.5 746.2 L757.4 746.0 L761.2 745.7 L765.0 745.3 L768.8 744.9 L772.6 744.4 L776.4 743.9 L780.2 743.4 L783.9 742.7 L787.6 742.1 L791.3 741.3 L795.0 740.6 L798.7 739.7 L802.3 738.9 L805.8 737.9 L809.4 736.9 L812.9 735.9 L816.4 734.8 L819.8 733.7 L823.2 732.6 L826.6 731.3 L829.9 730.1 L833.2 728.8 L836.4 727.4 L839.6 726.0 L842.7 724.6 L845.8 723.1 L848.9 721.6 L851.8 720.0 L854.8 718.4 L857.7 716.8 L860.5 715.1 L863.2 713.4 L865.9 711.7 L868.6 709.9M963.1 479.1 L962.3 475.6 L961.5 472.0 L960.6 468.5 L959.6 465.0 L958.4 461.5 L957.2 458.0 L956.0 454.5 L954.6 451.0 L953.1 447.6 L951.5 444.2 L949.9 440.8 L948.1 437.4 L946.3 434.0 L944.4 430.7 L942.4 427.4 L940.3 424.1 L938.1 420.8 L935.8 417.6 L933.4 414.4 L931.0 411.3 L928.5 408.1 L925.8 405.1 L923.2 402.0 L920.4 399.0 L917.5 396.1 L914.6 393.2 L911.5 390.3 L908.4 387.5 L905.3 384.7 L902.0 382.0 L898.7 379.3 L895.3 376.7 L891.8 374.1 L888.3 371.6 L884.6 369.2 L881.0 366.8 L877.2 364.4 L873.4 362.1 L869.5 359.9 L865.6 357.8 L861.6 355.7 L857.5 353.7 L853.4 351.7 L849.2 349.8 L845.0 348.0 L840.7 346.3 L836.4 344.6 L832.0 343.0 L827.6 341.4 L823.2 340.0 L818.7 338.6 L814.1 337.3 L809.6 336.0 L805.0 334.9 L800.3 333.8 L795.6 332.8 L790.9 331.8 L786.2 331.0 L781.5 330.2 L776.7 329.5 L771.9 328.9 L767.1 328.4 L762.3 328.0 L757.5 327.6 L752.6 327.3 L747.8 327.1 L742.9 327.0 L738.1 326.9M940.3 414.2 L938.5 411.1 L936.7 408.0 L934.8 405.0 L932.8 402.0 L930.8 399.0 L928.6 396.1 L926.4 393.2 L924.1 390.4 L921.7 387.6 L919.2 384.8 L916.6 382.1 L914.0 379.5 L911.3 376.8 L908.5 374.3 L905.6 371.8 L902.6 369.3 L899.6 366.9 L896.5 364.6 L893.3 362.3 L890.1 360.1 L886.8 357.9 L883.4 355.8 L880.0 353.8 L876.4 351.8 L872.8 349.9 L869.2 348.0 L865.5 346.2 L861.7 344.5 L857.9 342.8 L854.0 341.3 L850.0 339.7 L846.0 338.3 L842.0 336.9 L837.8 335.6 L833.7 334.4 L829.5 333.3 L825.2 332.2 L820.9 331.2 L816.6 330.3 L812.2 329.4 L807.7 328.7 L803.3 328.0 L798.8 327.4 L794.2 326.9 L789.7 326.4 L785.1 326.1 L780.5 325.8 L775.8 325.6 L771.2 325.5 L766.5 325.4 L761.8 325.5 L757.1 325.6 L752.3 325.8 L747.6 326.1 L742.8 326.5 L738.1 326.9M906.0 366.0 L903.7 363.6 L901.2 361.2 L898.8 358.9 L896.2 356.7 L893.6 354.5 L890.9 352.4 L888.1 350.3 L885.3 348.3 L882.4 346.4 L879.4 344.5 L876.3 342.7 L873.2 341.0 L870.1 339.3 L866.8 337.7 L863.5 336.2 L860.2 334.7 L856.8 333.3 L853.3 332.0 L849.7 330.7 L846.1 329.6 L842.5 328.5 L838.8 327.4 L835.0 326.5 L831.2 325.6 L827.4 324.8 L823.5 324.1 L819.5 323.5 L815.5 322.9 L811.5 322.4 L807.4 322.0 L803.3 321.7 L799.1 321.5 L795.0 321.3 L790.7 321.2 L786.5 321.3 L782.2 321.3 L777.9 321.5 L773.5 321.8 L769.2 322.1 L764.8 322.6 L760.4 323.1 L755.9 323.7 L751.5 324.4 L747.0 325.1 L742.6 326.0 L738.1 326.9M871.4 335.5 L868.9 333.8 L866.3 332.1 L863.7 330.6 L861.1 329.1 L858.3 327.7 L855.5 326.3 L852.7 325.1 L849.8 323.9 L846.8 322.7 L843.8 321.7 L840.7 320.7 L837.6 319.8 L834.4 319.0 L831.2 318.3 L827.9 317.6 L824.6 317.0 L821.2 316.5 L817.8 316.1 L814.4 315.8 L810.9 315.5 L807.3 315.3 L803.7 315.3 L800.1 315.3 L796.4 315.3 L792.7 315.5 L789.0 315.8 L785.2 316.1 L781.4 316.5 L777.6 317.0 L773.8 317.6 L769.9 318.3 L766.0 319.1 L762.0 320.0 L758.1 320.9 L754.1 321.9 L750.1 323.1 L746.1 324.3 L742.1 325.6 L738.1 326.9M839.3 316.3 L837.0 315.2 L834.6 314.2 L832.2 313.3 L829.7 312.4 L827.2 311.7 L824.6 311.0 L822.0 310.4 L819.4 309.9 L816.7 309.5 L813.9 309.1 L811.1 308.8 L808.3 308.7 L805.4 308.6 L802.5 308.6 L799.6 308.6 L796.6 308.8 L793.6 309.1 L790.6 309.4 L787.5 309.8 L784.4 310.3 L781.2 310.9 L778.0 311.6 L774.8 312.4 L771.6 313.3 L768.3 314.3 L765.0 315.3 L761.7 316.5 L758.4 317.7 L755.1 319.0 L751.7 320.4 L748.3 321.9 L744.9 323.5 L741.5 325.2 L738.1 326.9M809.5 304.1 L807.6 303.6 L805.6 303.2 L803.6 302.8 L801.5 302.5 L799.4 302.3 L797.3 302.2 L795.1 302.2 L792.9 302.3 L790.7 302.5 L788.5 302.7 L786.2 303.1 L783.9 303.5 L781.5 304.0 L779.1 304.6 L776.7 305.3 L774.3 306.1 L771.8 307.0 L769.4 308.0 L766.9 309.1 L764.3 310.2 L761.8 311.5 L759.2 312.8 L756.6 314.3 L754.0 315.8 L751.4 317.4 L748.8 319.2 L746.1 321.0 L743.4 322.9 L740.8 324.9 L738.1 326.9M784.4 297.4 L783.0 297.2 L781.6 297.1 L780.1 297.1 L778.7 297.2 L777.2 297.4 L775.7 297.6 L774.2 298.0 L772.6 298.4 L771.1 299.0 L769.5 299.6 L767.9 300.3 L766.3 301.1 L764.6 302.0 L763.0 303.0 L761.3 304.1 L759.6 305.3 L757.9 306.6 L756.1 308.0 L754.4 309.5 L752.6 311.0 L750.8 312.7 L749.0 314.4 L747.2 316.3 L745.4 318.2 L743.6 320.3 L741.8 322.4 L739.9 324.6 L738.1 326.9M760.9 293.8 L760.2 293.8 L759.5 293.9 L758.7 294.1 L758.0 294.4 L757.2 294.8 L756.4 295.2 L755.7 295.8 L754.9 296.4 L754.1 297.2 L753.2 298.0 L752.4 299.0 L751.6 300.0 L750.7 301.1 L749.9 302.3 L749.0 303.7 L748.1 305.1 L747.3 306.6 L746.4 308.2 L745.5 309.9 L744.6 311.7 L743.7 313.6 L742.7 315.6 L741.8 317.7 L740.9 319.8 L740.0 322.1 L739.0 324.5 L738.1 326.9M738.1 292.7 L738.1 292.7 L738.1 292.8 L738.1 293.1 L738.1 293.4 L738.1 293.8 L738.1 294.3 L738.1 294.9 L738.1 295.6 L738.1 296.4 L738.1 297.3 L738.1 298.2 L738.1 299.3 L738.1 300.5 L738.1 301.8 L738.1 303.1 L738.1 304.6 L738.1 306.1 L738.1 307.8 L738.1 309.5 L738.1 311.4 L738.1 313.3 L738.1 315.3 L738.1 317.5 L738.1 319.7 L738.1 322.0 L738.1 324.4 L738.1 326.9M715.3 293.8 L716.0 293.8 L716.7 293.9 L717.4 294.1 L718.2 294.4 L718.9 294.8 L719.7 295.2 L720.5 295.8 L721.3 296.4 L722.1 297.2 L722.9 298.0 L723.7 299.0 L724.6 300.0 L725.4 301.1 L726.3 302.3 L727.1 303.7 L728.0 305.1 L728.9 306.6 L729.8 308.2 L730.7 309.9 L731.6 311.7 L732.5 313.6 L733.4 315.6 L734.3 317.7 L735.3 319.8 L736.2 322.1 L737.1 324.5 L738.1 326.9M691.8 297.4 L693.2 297.2 L694.6 297.1 L696.0 297.1 L697.5 297.2 L698.9 297.4 L700.4 297.6 L702.0 298.0 L703.5 298.4 L705.1 299.0 L706.6 299.6 L708.2 300.3 L709.9 301.1 L711.5 302.0 L713.2 303.0 L714.9 304.1 L716.6 305.3 L718.3 306.6 L720.0 308.0 L721.8 309.5 L723.5 311.0 L725.3 312.7 L727.1 314.4 L728.9 316.3 L730.7 318.2 L732.5 320.3 L734.4 322.4 L736.2 324.6 L738.1 326.9M666.6 304.1 L668.5 303.6 L670.5 303.2 L672.6 302.8 L674.6 302.5 L676.7 302.3 L678.8 302.2 L681.0 302.2 L683.2 302.3 L685.4 302.5 L687.7 302.7 L690.0 303.1 L692.3 303.5 L694.6 304.0 L697.0 304.6 L699.4 305.3 L701.8 306.1 L704.3 307.0 L706.8 308.0 L709.3 309.1 L711.8 310.2 L714.4 311.5 L716.9 312.8 L719.5 314.3 L722.1 315.8 L724.7 317.4 L727.4 319.2 L730.0 321.0 L732.7 322.9 L735.4 324.9 L738.1 326.9M636.8 316.3 L639.2 315.2 L641.5 314.2 L644.0 313.3 L646.4 312.4 L648.9 311.7 L651.5 311.0 L654.1 310.4 L656.8 309.9 L659.5 309.5 L662.2 309.1 L665.0 308.8 L667.8 308.7 L670.7 308.6 L673.6 308.6 L676.5 308.6 L679.5 308.8 L682.5 309.1 L685.6 309.4 L688.7 309.8 L691.8 310.3 L694.9 310.9 L698.1 311.6 L701.3 312.4 L704.6 313.3 L707.8 314.3 L711.1 315.3 L714.4 316.5 L717.7 317.7 L721.1 319.0 L724.4 320.4 L727.8 321.9 L731.2 323.5 L734.6 325.2 L738.1 326.9M604.8 335.5 L607.3 333.8 L609.8 332.1 L612.4 330.6 L615.1 329.1 L617.8 327.7 L620.6 326.3 L623.5 325.1 L626.4 323.9 L629.3 322.7 L632.3 321.7 L635.4 320.7 L638.5 319.8 L641.7 319.0 L644.9 318.3 L648.2 317.6 L651.5 317.0 L654.9 316.5 L658.3 316.1 L661.8 315.8 L665.3 315.5 L668.8 315.3 L672.4 315.3 L676.0 315.3 L679.7 315.3 L683.4 315.5 L687.1 315.8 L690.9 316.1 L694.7 316.5 L698.5 317.0 L702.4 317.6 L706.3 318.3 L710.2 319.1 L714.1 320.0 L718.1 320.9 L722.0 321.9 L726.0 323.1 L730.0 324.3 L734.0 325.6 L738.1 326.9M570.2 366.0 L572.5 363.6 L574.9 361.2 L577.4 358.9 L579.9 356.7 L582.6 354.5 L585.3 352.4 L588.0 350.3 L590.9 348.3 L593.8 346.4 L596.8 344.5 L599.8 342.7 L602.9 341.0 L606.1 339.3 L609.3 337.7 L612.6 336.2 L616.0 334.7 L619.4 333.3 L622.9 332.0 L626.4 330.7 L630.0 329.6 L633.6 328.5 L637.3 327.4 L641.1 326.5 L644.9 325.6 L648.8 324.8 L652.7 324.1 L656.6 323.5 L660.6 322.9 L664.6 322.4 L668.7 322.0 L672.8 321.7 L677.0 321.5 L681.2 321.3 L685.4 321.2 L689.7 321.3 L694.0 321.3 L698.3 321.5 L702.6 321.8 L707.0 322.1 L711.4 322.6 L715.8 323.1 L720.2 323.7 L724.7 324.4 L729.1 325.1 L733.6 326.0 L738.1 326.9M535.9 414.2 L537.6 411.1 L539.4 408.0 L541.3 405.0 L543.3 402.0 L545.4 399.0 L547.5 396.1 L549.8 393.2 L552.1 390.4 L554.5 387.6 L557.0 384.8 L559.5 382.1 L562.2 379.5 L564.9 376.8 L567.7 374.3 L570.5 371.8 L573.5 369.3 L576.5 366.9 L579.6 364.6 L582.8 362.3 L586.0 360.1 L589.4 357.9 L592.7 355.8 L596.2 353.8 L599.7 351.8 L603.3 349.9 L606.9 348.0 L610.7 346.2 L614.4 344.5 L618.3 342.8 L622.2 341.3 L626.1 339.7 L630.1 338.3 L634.2 336.9 L638.3 335.6 L642.5 334.4 L646.7 333.3 L650.9 332.2 L655.2 331.2 L659.6 330.3 L664.0 329.4 L668.4 328.7 L672.9 328.0 L677.4 327.4 L681.9 326.9 L686.5 326.4 L691.1 326.1 L695.7 325.8 L700.3 325.6 L705.0 325.5 L709.7 325.4 L714.4 325.5 L719.1 325.6 L723.8 325.8 L728.6 326.1 L733.3 326.5 L738.1 326.9M513.0 479.1 L513.8 475.6 L514.6 472.0 L515.6 468.5 L516.6 465.0 L517.7 461.5 L518.9 458.0 L520.2 454.5 L521.6 451.0 L523.0 447.6 L524.6 444.2 L526.3 440.8 L528.0 437.4 L529.8 434.0 L531.8 430.7 L533.8 427.4 L535.9 424.1 L538.1 420.8 L540.3 417.6 L542.7 414.4 L545.1 411.3 L547.7 408.1 L550.3 405.1 L553.0 402.0 L555.8 399.0 L558.6 396.1 L561.6 393.2 L564.6 390.3 L567.7 387.5 L570.9 384.7 L574.1 382.0 L577.5 379.3 L580.9 376.7 L584.3 374.1 L587.9 371.6 L591.5 369.2 L595.2 366.8 L598.9 364.4 L602.8 362.1 L606.6 359.9 L610.6 357.8 L614.6 355.7 L618.6 353.7 L622.7 351.7 L626.9 349.8 L631.1 348.0 L635.4 346.3 L639.7 344.6 L644.1 343.0 L648.5 341.4 L653.0 340.0 L657.5 338.6 L662.0 337.3 L666.6 336.0 L671.2 334.9 L675.8 333.8 L680.5 332.8 L685.2 331.8 L689.9 331.0 L694.7 330.2 L699.4 329.5 L704.2 328.9 L709.0 328.4 L713.8 328.0 L718.7 327.6 L723.5 327.3 L728.4 327.1 L733.2 327.0 L738.1 326.9M511.2 553.1 L510.8 549.5 L510.5 546.0 L510.2 542.4 L510.1 538.8 L510.0 535.2 L510.0 531.6 L510.2 527.9 L510.4 524.3 L510.7 520.6 L511.1 516.9 L511.6 513.2 L512.1 509.6 L512.8 505.8 L513.6 502.1 L514.4 498.4 L515.4 494.7 L516.4 491.0 L517.6 487.3 L518.8 483.6 L520.1 479.9 L521.5 476.2 L523.0 472.5 L524.6 468.8 L526.3 465.1 L528.1 461.5 L529.9 457.8 L531.9 454.2 L534.0 450.6 L536.1 447.0 L538.3 443.5 L540.6 439.9 L543.0 436.4 L545.5 432.9 L548.1 429.5 L550.7 426.0 L553.5 422.6 L556.3 419.3 L559.2 415.9 L562.2 412.6 L565.2 409.4 L568.4 406.2 L571.6 403.0 L574.9 399.9 L578.2 396.8 L581.7 393.8 L585.2 390.8 L588.8 387.9 L592.4 385.0 L596.1 382.1 L599.9 379.4 L603.7 376.6 L607.6 374.0 L611.6 371.4 L615.6 368.8 L619.7 366.4 L623.8 363.9 L627.9 361.6 L632.2 359.3 L636.4 357.1 L640.8 354.9 L645.1 352.8 L649.5 350.8 L654.0 348.9 L658.4 347.0 L663.0 345.2 L667.5 343.5 L672.1 341.8 L676.7 340.2 L681.3 338.7 L686.0 337.3 L690.6 336.0 L695.3 334.7 L700.0 333.5 L704.8 332.4 L709.5 331.4 L714.3 330.4 L719.0 329.6 L723.8 328.8 L728.5 328.1 L733.3 327.5 L738.1 326.9M531.4 620.4 L530.0 617.4 L528.7 614.3 L527.5 611.1 L526.3 608.0 L525.2 604.7 L524.2 601.5 L523.3 598.1 L522.5 594.8 L521.8 591.4 L521.1 588.0 L520.5 584.5 L520.0 581.0 L519.6 577.4 L519.3 573.8 L519.0 570.2 L518.9 566.6 L518.8 562.9 L518.9 559.2 L519.0 555.5 L519.2 551.7 L519.5 547.9 L519.9 544.1 L520.4 540.3 L520.9 536.5 L521.6 532.6 L522.3 528.7 L523.2 524.8 L524.1 520.9 L525.1 517.0 L526.2 513.1 L527.4 509.2 L528.7 505.2 L530.1 501.3 L531.6 497.4 L533.1 493.4 L534.8 489.5 L536.5 485.5 L538.4 481.6 L540.3 477.7 L542.3 473.8 L544.4 469.9 L546.5 466.0 L548.8 462.1 L551.1 458.3 L553.6 454.5 L556.1 450.6 L558.6 446.9 L561.3 443.1 L564.1 439.4 L566.9 435.7 L569.8 432.0 L572.7 428.3 L575.8 424.7 L578.9 421.1 L582.1 417.6 L585.4 414.1 L588.7 410.7 L592.1 407.3 L595.5 403.9 L599.1 400.6 L602.6 397.3 L606.3 394.1 L610.0 390.9 L613.8 387.8 L617.6 384.8 L621.4 381.8 L625.3 378.8 L629.3 375.9 L633.3 373.1 L637.4 370.4 L641.5 367.7 L645.6 365.0 L649.8 362.5 L654.0 360.0 L658.2 357.6 L662.5 355.2 L666.8 352.9 L671.2 350.7 L675.5 348.6 L679.9 346.5 L684.3 344.5 L688.8 342.6 L693.2 340.8 L697.7 339.1 L702.1 337.4 L706.6 335.8 L711.1 334.3 L715.6 332.9 L720.1 331.5 L724.6 330.2 L729.1 329.1 L733.6 327.9 L738.1 326.9M563.4 669.8 L561.5 667.5 L559.7 665.1 L557.9 662.6 L556.2 660.1 L554.6 657.5 L553.0 654.8 L551.5 652.1 L550.1 649.3 L548.7 646.4 L547.4 643.5 L546.2 640.5 L545.0 637.5 L544.0 634.4 L542.9 631.3 L542.0 628.1 L541.2 624.8 L540.4 621.5 L539.7 618.1 L539.1 614.7 L538.5 611.2 L538.1 607.7 L537.7 604.2 L537.4 600.6 L537.2 596.9 L537.0 593.2 L537.0 589.5 L537.0 585.7 L537.1 581.9 L537.3 578.0 L537.6 574.1 L537.9 570.2 L538.4 566.2 L538.9 562.3 L539.5 558.2 L540.2 554.2 L541.0 550.1 L541.9 546.0 L542.8 541.9 L543.9 537.8 L545.0 533.7 L546.2 529.5 L547.5 525.3 L548.9 521.2 L550.3 517.0 L551.9 512.8 L553.5 508.6 L555.2 504.3 L557.0 500.1 L558.8 495.9 L560.8 491.7 L562.8 487.5 L564.9 483.3 L567.1 479.2 L569.3 475.0 L571.7 470.8 L574.1 466.7 L576.5 462.6 L579.1 458.5 L581.7 454.4 L584.4 450.3 L587.1 446.3 L590.0 442.3 L592.8 438.4 L595.8 434.4 L598.8 430.5 L601.9 426.7 L605.0 422.8 L608.2 419.1 L611.5 415.3 L614.8 411.6 L618.1 408.0 L621.5 404.4 L625.0 400.8 L628.5 397.4 L632.0 393.9 L635.6 390.5 L639.3 387.2 L642.9 383.9 L646.7 380.7 L650.4 377.6 L654.2 374.5 L658.0 371.5 L661.9 368.6 L665.7 365.7 L669.6 362.9 L673.6 360.2 L677.5 357.5 L681.5 354.9 L685.5 352.4 L689.5 349.9 L693.5 347.6 L697.5 345.3 L701.6 343.1 L705.6 341.0 L709.7 338.9 L713.7 337.0 L717.8 335.1 L721.9 333.3 L725.9 331.6 L730.0 329.9 L734.0 328.4 L738.1 326.9M600.4 704.7 L598.4 703.1 L596.4 701.4 L594.5 699.7 L592.6 697.9 L590.8 696.0 L589.1 694.0 L587.3 691.9 L585.7 689.8 L584.1 687.6 L582.5 685.3 L581.0 683.0 L579.6 680.5 L578.2 678.0 L576.9 675.4 L575.6 672.8 L574.4 670.1 L573.3 667.3 L572.2 664.4 L571.2 661.5 L570.2 658.4 L569.4 655.4 L568.5 652.2 L567.8 649.0 L567.1 645.7 L566.5 642.4 L566.0 639.0 L565.5 635.6 L565.1 632.0 L564.7 628.5 L564.5 624.8 L564.3 621.1 L564.2 617.4 L564.1 613.6 L564.1 609.7 L564.2 605.8 L564.4 601.9 L564.6 597.9 L565.0 593.9 L565.4 589.8 L565.8 585.7 L566.4 581.5 L567.0 577.3 L567.7 573.1 L568.4 568.9 L569.3 564.6 L570.2 560.2 L571.2 555.9 L572.2 551.5 L573.4 547.1 L574.6 542.7 L575.8 538.3 L577.2 533.9 L578.6 529.4 L580.1 524.9 L581.7 520.4 L583.3 516.0 L585.0 511.5 L586.8 507.0 L588.6 502.5 L590.5 498.0 L592.5 493.5 L594.5 489.1 L596.6 484.6 L598.8 480.1 L601.0 475.7 L603.3 471.3 L605.7 466.9 L608.1 462.5 L610.5 458.2 L613.0 453.8 L615.6 449.5 L618.2 445.3 L620.9 441.0 L623.6 436.8 L626.4 432.7 L629.2 428.5 L632.1 424.5 L635.0 420.4 L638.0 416.4 L641.0 412.5 L644.0 408.6 L647.1 404.8 L650.2 401.0 L653.3 397.3 L656.5 393.6 L659.7 390.0 L663.0 386.4 L666.2 383.0 L669.5 379.5 L672.8 376.2 L676.2 372.9 L679.5 369.7 L682.9 366.6 L686.3 363.5 L689.7 360.5 L693.1 357.6 L696.6 354.7 L700.0 352.0 L703.5 349.3 L706.9 346.7 L710.4 344.1 L713.9 341.7 L717.3 339.3 L720.8 337.0 L724.3 334.8 L727.7 332.7 L731.2 330.7 L734.6 328.8 L738.1 326.9M637.3 727.3 L635.5 726.4 L633.7 725.4 L632.0 724.3 L630.3 723.1 L628.7 721.8 L627.1 720.5 L625.5 719.1 L623.9 717.5 L622.4 715.9 L621.0 714.2 L619.6 712.4 L618.2 710.6 L616.8 708.6 L615.5 706.6 L614.3 704.5 L613.1 702.3 L611.9 700.0 L610.8 697.6 L609.8 695.2 L608.7 692.6 L607.8 690.0 L606.8 687.3 L606.0 684.6 L605.2 681.7 L604.4 678.8 L603.7 675.8 L603.0 672.7 L602.4 669.5 L601.9 666.3 L601.4 663.0 L600.9 659.6 L600.5 656.1 L600.2 652.6 L599.9 649.0 L599.7 645.4 L599.6 641.7 L599.5 637.9 L599.4 634.0 L599.5 630.1 L599.5 626.2 L599.7 622.1 L599.9 618.1 L600.1 613.9 L600.4 609.7 L600.8 605.5 L601.3 601.2 L601.8 596.9 L602.3 592.6 L602.9 588.1 L603.6 583.7 L604.3 579.2 L605.1 574.7 L606.0 570.1 L606.9 565.6 L607.9 561.0 L608.9 556.3 L610.0 551.7 L611.1 547.0 L612.4 542.3 L613.6 537.6 L614.9 532.9 L616.3 528.1 L617.7 523.4 L619.2 518.7 L620.7 513.9 L622.3 509.2 L624.0 504.4 L625.7 499.7 L627.4 494.9 L629.2 490.2 L631.0 485.5 L632.9 480.8 L634.8 476.1 L636.8 471.5 L638.8 466.8 L640.9 462.2 L643.0 457.6 L645.1 453.1 L647.3 448.6 L649.5 444.1 L651.8 439.6 L654.1 435.2 L656.4 430.8 L658.8 426.5 L661.2 422.2 L663.6 418.0 L666.0 413.8 L668.5 409.7 L671.0 405.7 L673.6 401.6 L676.1 397.7 L678.7 393.8 L681.3 390.0 L683.9 386.2 L686.5 382.5 L689.2 378.9 L691.9 375.3 L694.5 371.9 L697.2 368.4 L699.9 365.1 L702.6 361.8 L705.4 358.7 L708.1 355.6 L710.8 352.5 L713.6 349.6 L716.3 346.7 L719.0 344.0 L721.8 341.3 L724.5 338.7 L727.2 336.1 L729.9 333.7 L732.7 331.4 L735.4 329.1 L738.1 326.9M672.0 741.0 L670.6 740.5 L669.4 740.0 L668.1 739.3 L666.8 738.6 L665.6 737.8 L664.4 736.9 L663.2 735.9 L662.1 734.8 L660.9 733.7 L659.8 732.4 L658.8 731.1 L657.7 729.6 L656.7 728.1 L655.7 726.5 L654.7 724.7 L653.8 722.9 L652.9 721.0 L652.0 719.0 L651.2 717.0 L650.3 714.8 L649.6 712.5 L648.8 710.2 L648.1 707.7 L647.4 705.2 L646.8 702.6 L646.2 699.9 L645.6 697.1 L645.0 694.2 L644.5 691.3 L644.1 688.2 L643.6 685.1 L643.3 681.9 L642.9 678.6 L642.6 675.3 L642.3 671.8 L642.1 668.3 L641.9 664.7 L641.8 661.0 L641.6 657.3 L641.6 653.5 L641.5 649.6 L641.6 645.6 L641.6 641.6 L641.7 637.5 L641.9 633.4 L642.0 629.2 L642.3 624.9 L642.5 620.6 L642.8 616.3 L643.2 611.8 L643.6 607.4 L644.0 602.8 L644.5 598.3 L645.0 593.7 L645.6 589.0 L646.2 584.3 L646.8 579.6 L647.5 574.8 L648.2 570.0 L649.0 565.2 L649.8 560.4 L650.6 555.5 L651.5 550.6 L652.4 545.7 L653.4 540.8 L654.4 535.9 L655.4 530.9 L656.5 526.0 L657.6 521.0 L658.8 516.0 L660.0 511.1 L661.2 506.1 L662.4 501.2 L663.7 496.3 L665.0 491.3 L666.4 486.4 L667.8 481.5 L669.2 476.6 L670.6 471.8 L672.1 467.0 L673.6 462.2 L675.1 457.4 L676.7 452.7 L678.2 448.0 L679.8 443.3 L681.5 438.7 L683.1 434.1 L684.8 429.6 L686.5 425.1 L688.2 420.7 L689.9 416.3 L691.7 412.0 L693.4 407.7 L695.2 403.5 L697.0 399.3 L698.8 395.2 L700.6 391.2 L702.4 387.3 L704.3 383.4 L706.1 379.6 L708.0 375.8 L709.9 372.2 L711.7 368.6 L713.6 365.1 L715.5 361.6 L717.4 358.3 L719.3 355.0 L721.1 351.8 L723.0 348.7 L724.9 345.7 L726.8 342.7 L728.7 339.9 L730.6 337.1 L732.5 334.4 L734.3 331.8 L736.2 329.3 L738.1 326.9M704.9 748.3 L704.2 748.0 L703.5 747.7 L702.9 747.3 L702.2 746.8 L701.6 746.2 L700.9 745.6 L700.3 744.8 L699.7 743.9 L699.1 743.0 L698.5 741.9 L698.0 740.8 L697.4 739.5 L696.9 738.2 L696.3 736.7 L695.8 735.2 L695.3 733.6 L694.9 731.9 L694.4 730.0 L693.9 728.1 L693.5 726.1 L693.1 724.0 L692.7 721.8 L692.3 719.6 L691.9 717.2 L691.6 714.7 L691.2 712.1 L690.9 709.5 L690.6 706.8 L690.3 703.9 L690.1 701.0 L689.8 698.0 L689.6 694.9 L689.4 691.7 L689.2 688.4 L689.1 685.1 L688.9 681.6 L688.8 678.1 L688.7 674.5 L688.6 670.8 L688.6 667.1 L688.6 663.2 L688.5 659.3 L688.5 655.4 L688.6 651.3 L688.6 647.2 L688.7 643.0 L688.8 638.8 L688.9 634.5 L689.0 630.1 L689.2 625.7 L689.4 621.2 L689.6 616.6 L689.8 612.0 L690.1 607.4 L690.3 602.7 L690.6 598.0 L690.9 593.2 L691.3 588.4 L691.6 583.5 L692.0 578.6 L692.4 573.7 L692.8 568.8 L693.2 563.8 L693.7 558.8 L694.2 553.7 L694.7 548.7 L695.2 543.6 L695.7 538.6 L696.3 533.5 L696.8 528.4 L697.4 523.3 L698.0 518.2 L698.7 513.1 L699.3 508.0 L700.0 503.0 L700.7 497.9 L701.3 492.8 L702.1 487.8 L702.8 482.8 L703.5 477.8 L704.3 472.8 L705.1 467.8 L705.8 462.9 L706.6 458.0 L707.4 453.2 L708.3 448.3 L709.1 443.6 L710.0 438.8 L710.8 434.1 L711.7 429.5 L712.6 424.9 L713.4 420.4 L714.3 415.9 L715.2 411.4 L716.1 407.1 L717.1 402.8 L718.0 398.5 L718.9 394.3 L719.9 390.2 L720.8 386.2 L721.8 382.2 L722.7 378.3 L723.7 374.5 L724.6 370.7 L725.6 367.0 L726.5 363.4 L727.5 359.9 L728.5 356.5 L729.4 353.1 L730.4 349.9 L731.4 346.7 L732.3 343.6 L733.3 340.6 L734.3 337.7 L735.2 334.9 L736.2 332.1 L737.1 329.5 L738.1 326.9M738.1 750.7 L738.1 750.6 L738.1 750.4 L738.1 750.2 L738.1 749.8 L738.1 749.4 L738.1 748.8 L738.1 748.2 L738.1 747.5 L738.1 746.6 L738.1 745.7 L738.1 744.7 L738.1 743.6 L738.1 742.4 L738.1 741.1 L738.1 739.7 L738.1 738.2 L738.1 736.6 L738.1 734.9 L738.1 733.1 L738.1 731.2 L738.1 729.3 L738.1 727.2 L738.1 725.0 L738.1 722.8 L738.1 720.4 L738.1 717.9 L738.1 715.4 L738.1 712.8 L738.1 710.0 L738.1 707.2 L738.1 704.3 L738.1 701.3 L738.1 698.2 L738.1 695.0 L738.1 691.8 L738.1 688.4 L738.1 685.0 L738.1 681.5 L738.1 677.9 L738.1 674.2 L738.1 670.4 L738.1 666.6 L738.1 662.7 L738.1 658.7 L738.1 654.6 L738.1 650.5 L738.1 646.3 L738.1 642.0 L738.1 637.7 L738.1 633.3 L738.1 628.9 L738.1 624.3 L738.1 619.8 L738.1 615.2 L738.1 610.5 L738.1 605.8 L738.1 601.0 L738.1 596.2 L738.1 591.4 L738.1 586.5 L738.1 581.5 L738.1 576.6 L738.1 571.6 L738.1 566.6 L738.1 561.5 L738.1 556.5 L738.1 551.4 L738.1 546.3 L738.1 541.2 L738.1 536.1 L738.1 530.9 L738.1 525.8 L738.1 520.7 L738.1 515.5 L738.1 510.4 L738.1 505.2 L738.1 500.1 L738.1 495.0 L738.1 489.9 L738.1 484.9 L738.1 479.8 L738.1 474.8 L738.1 469.8 L738.1 464.8 L738.1 459.8 L738.1 454.9 L738.1 450.1 L738.1 445.2 L738.1 440.4 L738.1 435.7 L738.1 431.0 L738.1 426.3 L738.1 421.7 L738.1 417.2 L738.1 412.7 L738.1 408.3 L738.1 403.9 L738.1 399.6 L738.1 395.4 L738.1 391.2 L738.1 387.1 L738.1 383.1 L738.1 379.1 L738.1 375.2 L738.1 371.4 L738.1 367.7 L738.1 364.1 L738.1 360.5 L738.1 357.0 L738.1 353.6 L738.1 350.3 L738.1 347.1 L738.1 343.9 L738.1 340.9 L738.1 337.9 L738.1 335.0 L738.1 332.2 L738.1 329.5 L738.1 326.9M771.2 748.3 L771.9 748.0 L772.6 747.7 L773.3 747.3 L773.9 746.8 L774.6 746.2 L775.2 745.6 L775.8 744.8 L776.4 743.9 L777.0 743.0 L777.6 741.9 L778.2 740.8 L778.7 739.5 L779.3 738.2 L779.8 736.7 L780.3 735.2 L780.8 733.6 L781.3 731.9 L781.8 730.0 L782.2 728.1 L782.6 726.1 L783.1 724.0 L783.5 721.8 L783.9 719.6 L784.2 717.2 L784.6 714.7 L784.9 712.1 L785.2 709.5 L785.5 706.8 L785.8 703.9 L786.1 701.0 L786.3 698.0 L786.5 694.9 L786.7 691.7 L786.9 688.4 L787.1 685.1 L787.2 681.6 L787.3 678.1 L787.4 674.5 L787.5 670.8 L787.6 667.1 L787.6 663.2 L787.6 659.3 L787.6 655.4 L787.6 651.3 L787.5 647.2 L787.4 643.0 L787.4 638.8 L787.2 634.5 L787.1 630.1 L786.9 625.7 L786.8 621.2 L786.6 616.6 L786.3 612.0 L786.1 607.4 L785.8 602.7 L785.5 598.0 L785.2 593.2 L784.9 588.4 L784.5 583.5 L784.2 578.6 L783.8 573.7 L783.4 568.8 L782.9 563.8 L782.5 558.8 L782.0 553.7 L781.5 548.7 L781.0 543.6 L780.4 538.6 L779.9 533.5 L779.3 528.4 L778.7 523.3 L778.1 518.2 L777.5 513.1 L776.8 508.0 L776.2 503.0 L775.5 497.9 L774.8 492.8 L774.1 487.8 L773.4 482.8 L772.6 477.8 L771.9 472.8 L771.1 467.8 L770.3 462.9 L769.5 458.0 L768.7 453.2 L767.9 448.3 L767.0 443.6 L766.2 438.8 L765.3 434.1 L764.5 429.5 L763.6 424.9 L762.7 420.4 L761.8 415.9 L760.9 411.4 L760.0 407.1 L759.1 402.8 L758.1 398.5 L757.2 394.3 L756.3 390.2 L755.3 386.2 L754.4 382.2 L753.4 378.3 L752.5 374.5 L751.5 370.7 L750.6 367.0 L749.6 363.4 L748.6 359.9 L747.7 356.5 L746.7 353.1 L745.7 349.9 L744.8 346.7 L743.8 343.6 L742.8 340.6 L741.9 337.7 L740.9 334.9 L740.0 332.1 L739.0 329.5 L738.1 326.9M804.2 741.0 L805.5 740.5 L806.8 740.0 L808.1 739.3 L809.3 738.6 L810.5 737.8 L811.7 736.9 L812.9 735.9 L814.1 734.8 L815.2 733.7 L816.3 732.4 L817.4 731.1 L818.4 729.6 L819.5 728.1 L820.5 726.5 L821.4 724.7 L822.4 722.9 L823.3 721.0 L824.1 719.0 L825.0 717.0 L825.8 714.8 L826.6 712.5 L827.3 710.2 L828.1 707.7 L828.7 705.2 L829.4 702.6 L830.0 699.9 L830.6 697.1 L831.1 694.2 L831.6 691.3 L832.1 688.2 L832.5 685.1 L832.9 681.9 L833.2 678.6 L833.5 675.3 L833.8 671.8 L834.0 668.3 L834.2 664.7 L834.4 661.0 L834.5 657.3 L834.6 653.5 L834.6 649.6 L834.6 645.6 L834.5 641.6 L834.4 637.5 L834.3 633.4 L834.1 629.2 L833.9 624.9 L833.6 620.6 L833.3 616.3 L833.0 611.8 L832.6 607.4 L832.1 602.8 L831.7 598.3 L831.1 593.7 L830.6 589.0 L830.0 584.3 L829.3 579.6 L828.7 574.8 L827.9 570.0 L827.2 565.2 L826.4 560.4 L825.5 555.5 L824.6 550.6 L823.7 545.7 L822.7 540.8 L821.7 535.9 L820.7 530.9 L819.6 526.0 L818.5 521.0 L817.4 516.0 L816.2 511.1 L815.0 506.1 L813.7 501.2 L812.4 496.3 L811.1 491.3 L809.8 486.4 L808.4 481.5 L807.0 476.6 L805.5 471.8 L804.0 467.0 L802.5 462.2 L801.0 457.4 L799.5 452.7 L797.9 448.0 L796.3 443.3 L794.7 438.7 L793.0 434.1 L791.4 429.6 L789.7 425.1 L788.0 420.7 L786.2 416.3 L784.5 412.0 L782.7 407.7 L780.9 403.5 L779.2 399.3 L777.4 395.2 L775.5 391.2 L773.7 387.3 L771.9 383.4 L770.0 379.6 L768.2 375.8 L766.3 372.2 L764.4 368.6 L762.5 365.1 L760.7 361.6 L758.8 358.3 L756.9 355.0 L755.0 351.8 L753.1 348.7 L751.2 345.7 L749.3 342.7 L747.4 339.9 L745.6 337.1 L743.7 334.4 L741.8 331.8 L739.9 329.3 L738.1 326.9M838.9 727.3 L840.7 726.4 L842.4 725.4 L844.1 724.3 L845.8 723.1 L847.5 721.8 L849.1 720.5 L850.7 719.1 L852.2 717.5 L853.7 715.9 L855.2 714.2 L856.6 712.4 L858.0 710.6 L859.3 708.6 L860.6 706.6 L861.8 704.5 L863.1 702.3 L864.2 700.0 L865.3 697.6 L866.4 695.2 L867.4 692.6 L868.4 690.0 L869.3 687.3 L870.2 684.6 L871.0 681.7 L871.7 678.8 L872.5 675.8 L873.1 672.7 L873.7 669.5 L874.3 666.3 L874.8 663.0 L875.2 659.6 L875.6 656.1 L875.9 652.6 L876.2 649.0 L876.4 645.4 L876.6 641.7 L876.7 637.9 L876.7 634.0 L876.7 630.1 L876.6 626.2 L876.5 622.1 L876.3 618.1 L876.0 613.9 L875.7 609.7 L875.3 605.5 L874.9 601.2 L874.4 596.9 L873.8 592.6 L873.2 588.1 L872.5 583.7 L871.8 579.2 L871.0 574.7 L870.2 570.1 L869.2 565.6 L868.3 561.0 L867.2 556.3 L866.1 551.7 L865.0 547.0 L863.8 542.3 L862.5 537.6 L861.2 532.9 L859.8 528.1 L858.4 523.4 L856.9 518.7 L855.4 513.9 L853.8 509.2 L852.2 504.4 L850.5 499.7 L848.7 494.9 L847.0 490.2 L845.1 485.5 L843.2 480.8 L841.3 476.1 L839.3 471.5 L837.3 466.8 L835.3 462.2 L833.2 457.6 L831.0 453.1 L828.8 448.6 L826.6 444.1 L824.3 439.6 L822.1 435.2 L819.7 430.8 L817.4 426.5 L815.0 422.2 L812.5 418.0 L810.1 413.8 L807.6 409.7 L805.1 405.7 L802.6 401.6 L800.0 397.7 L797.4 393.8 L794.8 390.0 L792.2 386.2 L789.6 382.5 L786.9 378.9 L784.3 375.3 L781.6 371.9 L778.9 368.4 L776.2 365.1 L773.5 361.8 L770.8 358.7 L768.1 355.6 L765.3 352.5 L762.6 349.6 L759.9 346.7 L757.1 344.0 L754.4 341.3 L751.7 338.7 L748.9 336.1 L746.2 333.7 L743.5 331.4 L740.8 329.1 L738.1 326.9M875.8 704.7 L877.8 703.1 L879.7 701.4 L881.6 699.7 L883.5 697.9 L885.3 696.0 L887.1 694.0 L888.8 691.9 L890.5 689.8 L892.1 687.6 L893.6 685.3 L895.1 683.0 L896.6 680.5 L897.9 678.0 L899.3 675.4 L900.5 672.8 L901.7 670.1 L902.9 667.3 L903.9 664.4 L904.9 661.5 L905.9 658.4 L906.8 655.4 L907.6 652.2 L908.3 649.0 L909.0 645.7 L909.6 642.4 L910.2 639.0 L910.7 635.6 L911.1 632.0 L911.4 628.5 L911.7 624.8 L911.9 621.1 L912.0 617.4 L912.0 613.6 L912.0 609.7 L911.9 605.8 L911.7 601.9 L911.5 597.9 L911.2 593.9 L910.8 589.8 L910.3 585.7 L909.8 581.5 L909.2 577.3 L908.5 573.1 L907.7 568.9 L906.9 564.6 L906.0 560.2 L905.0 555.9 L903.9 551.5 L902.8 547.1 L901.6 542.7 L900.3 538.3 L898.9 533.9 L897.5 529.4 L896.0 524.9 L894.5 520.4 L892.8 516.0 L891.1 511.5 L889.4 507.0 L887.5 502.5 L885.6 498.0 L883.6 493.5 L881.6 489.1 L879.5 484.6 L877.3 480.1 L875.1 475.7 L872.8 471.3 L870.5 466.9 L868.1 462.5 L865.6 458.2 L863.1 453.8 L860.5 449.5 L857.9 445.3 L855.2 441.0 L852.5 436.8 L849.7 432.7 L846.9 428.5 L844.0 424.5 L841.1 420.4 L838.2 416.4 L835.2 412.5 L832.1 408.6 L829.1 404.8 L826.0 401.0 L822.8 397.3 L819.6 393.6 L816.4 390.0 L813.2 386.4 L809.9 383.0 L806.6 379.5 L803.3 376.2 L800.0 372.9 L796.6 369.7 L793.2 366.6 L789.8 363.5 L786.4 360.5 L783.0 357.6 L779.6 354.7 L776.1 352.0 L772.7 349.3 L769.2 346.7 L765.7 344.1 L762.3 341.7 L758.8 339.3 L755.3 337.0 L751.9 334.8 L748.4 332.7 L745.0 330.7 L741.5 328.8 L738.1 326.9M912.7 669.8 L914.6 667.5 L916.4 665.1 L918.2 662.6 L919.9 660.1 L921.6 657.5 L923.1 654.8 L924.6 652.1 L926.1 649.3 L927.4 646.4 L928.7 643.5 L930.0 640.5 L931.1 637.5 L932.2 634.4 L933.2 631.3 L934.1 628.1 L935.0 624.8 L935.8 621.5 L936.5 618.1 L937.1 614.7 L937.6 611.2 L938.1 607.7 L938.5 604.2 L938.8 600.6 L939.0 596.9 L939.1 593.2 L939.2 589.5 L939.2 585.7 L939.0 581.9 L938.8 578.0 L938.6 574.1 L938.2 570.2 L937.8 566.2 L937.2 562.3 L936.6 558.2 L935.9 554.2 L935.1 550.1 L934.3 546.0 L933.3 541.9 L932.3 537.8 L931.1 533.7 L929.9 529.5 L928.6 525.3 L927.3 521.2 L925.8 517.0 L924.3 512.8 L922.7 508.6 L921.0 504.3 L919.2 500.1 L917.3 495.9 L915.4 491.7 L913.3 487.5 L911.2 483.3 L909.1 479.2 L906.8 475.0 L904.5 470.8 L902.1 466.7 L899.6 462.6 L897.1 458.5 L894.5 454.4 L891.8 450.3 L889.0 446.3 L886.2 442.3 L883.3 438.4 L880.4 434.4 L877.3 430.5 L874.3 426.7 L871.1 422.8 L867.9 419.1 L864.7 415.3 L861.4 411.6 L858.0 408.0 L854.6 404.4 L851.2 400.8 L847.7 397.4 L844.1 393.9 L840.5 390.5 L836.9 387.2 L833.2 383.9 L829.5 380.7 L825.7 377.6 L822.0 374.5 L818.1 371.5 L814.3 368.6 L810.4 365.7 L806.5 362.9 L802.6 360.2 L798.6 357.5 L794.7 354.9 L790.7 352.4 L786.7 349.9 L782.6 347.6 L778.6 345.3 L774.6 343.1 L770.5 341.0 L766.5 338.9 L762.4 337.0 L758.3 335.1 L754.3 333.3 L750.2 331.6 L746.2 329.9 L742.1 328.4 L738.1 326.9M944.7 620.4 L946.1 617.4 L947.4 614.3 L948.7 611.1 L949.8 608.0 L950.9 604.7 L951.9 601.5 L952.8 598.1 L953.6 594.8 L954.4 591.4 L955.1 588.0 L955.6 584.5 L956.1 581.0 L956.5 577.4 L956.9 573.8 L957.1 570.2 L957.2 566.6 L957.3 562.9 L957.3 559.2 L957.2 555.5 L956.9 551.7 L956.7 547.9 L956.3 544.1 L955.8 540.3 L955.2 536.5 L954.6 532.6 L953.8 528.7 L953.0 524.8 L952.0 520.9 L951.0 517.0 L949.9 513.1 L948.7 509.2 L947.4 505.2 L946.0 501.3 L944.6 497.4 L943.0 493.4 L941.3 489.5 L939.6 485.5 L937.8 481.6 L935.9 477.7 L933.9 473.8 L931.8 469.9 L929.6 466.0 L927.4 462.1 L925.0 458.3 L922.6 454.5 L920.1 450.6 L917.5 446.9 L914.8 443.1 L912.1 439.4 L909.3 435.7 L906.4 432.0 L903.4 428.3 L900.3 424.7 L897.2 421.1 L894.0 417.6 L890.8 414.1 L887.5 410.7 L884.1 407.3 L880.6 403.9 L877.1 400.6 L873.5 397.3 L869.8 394.1 L866.1 390.9 L862.4 387.8 L858.6 384.8 L854.7 381.8 L850.8 378.8 L846.8 375.9 L842.8 373.1 L838.8 370.4 L834.7 367.7 L830.5 365.0 L826.4 362.5 L822.1 360.0 L817.9 357.6 L813.6 355.2 L809.3 352.9 L805.0 350.7 L800.6 348.6 L796.2 346.5 L791.8 344.5 L787.4 342.6 L782.9 340.8 L778.5 339.1 L774.0 337.4 L769.5 335.8 L765.0 334.3 L760.5 332.9 L756.0 331.5 L751.6 330.2 L747.1 329.1 L742.6 327.9 L738.1 326.9M964.9 553.1 L965.3 549.5 L965.7 546.0 L965.9 542.4 L966.1 538.8 L966.1 535.2 L966.1 531.6 L966.0 527.9 L965.8 524.3 L965.5 520.6 L965.1 516.9 L964.6 513.2 L964.0 509.6 L963.3 505.8 L962.6 502.1 L961.7 498.4 L960.8 494.7 L959.7 491.0 L958.6 487.3 L957.4 483.6 L956.0 479.9 L954.6 476.2 L953.1 472.5 L951.5 468.8 L949.8 465.1 L948.1 461.5 L946.2 457.8 L944.2 454.2 L942.2 450.6 L940.1 447.0 L937.8 443.5 L935.5 439.9 L933.1 436.4 L930.6 432.9 L928.1 429.5 L925.4 426.0 L922.7 422.6 L919.8 419.3 L916.9 415.9 L914.0 412.6 L910.9 409.4 L907.8 406.2 L904.6 403.0 L901.3 399.9 L897.9 396.8 L894.5 393.8 L891.0 390.8 L887.4 387.9 L883.7 385.0 L880.0 382.1 L876.3 379.4 L872.4 376.6 L868.5 374.0 L864.6 371.4 L860.6 368.8 L856.5 366.4 L852.4 363.9 L848.2 361.6 L844.0 359.3 L839.7 357.1 L835.4 354.9 L831.0 352.8 L826.6 350.8 L822.2 348.9 L817.7 347.0 L813.2 345.2 L808.6 343.5 L804.1 341.8 L799.5 340.2 L794.8 338.7 L790.2 337.3 L785.5 336.0 L780.8 334.7 L776.1 333.5 L771.4 332.4 L766.6 331.4 L761.9 330.4 L757.1 329.6 L752.4 328.8 L747.6 328.1 L742.8 327.5 L738.1 326.9" fill="none" stroke="#ececec" stroke-width="1.05"/>
<path d="M925.2 242.0 L920.9 239.7 L916.6 237.5 L912.3 235.2 L908.0 233.0 L903.8 230.8 L899.0 228.8 L894.3 226.9 L889.5 225.0 L884.8 223.0 L880.1 221.1 L875.0 219.5 L869.9 217.9 L864.8 216.3 L859.8 214.7 L854.7 213.1 L849.3 211.8 L843.9 210.5 L838.5 209.2 L833.2 207.9 L827.8 206.7 L822.2 205.7 L816.6 204.8 L811.0 203.9 L805.4 202.9 L799.8 202.0 L794.1 201.4 L788.3 200.9 L782.6 200.3 L776.8 199.7 L771.1 199.1 L765.3 198.9 L759.4 198.7 L753.6 198.4 L747.8 198.2 L742.0 198.0 L736.1 198.1 L730.3 198.2 L724.5 198.4 L718.6 198.5 L712.8 198.6 L707.0 199.1 L701.3 199.6 L695.5 200.1 L689.7 200.6 L683.9 201.1 L678.3 201.9 L672.7 202.7 L667.0 203.6 L661.4 204.4 L655.7 205.3 L650.3 206.4 L644.9 207.6 L639.4 208.8 L634.0 210.0 L628.5 211.2 L623.3 212.7 L618.2 214.2 L613.0 215.8 L607.8 217.3 L602.6 218.8 L597.8 220.7 L593.0 222.5 L588.2 224.3 L583.3 226.2 L578.5 228.1 L574.1 230.2 L569.7 232.4 L565.3 234.5 L560.9 236.7 L556.4 238.9 L552.5 241.3 L548.6 243.7 L544.7 246.2 L540.7 248.7 L536.8 251.1 L533.5 253.8 L530.1 256.5 L526.8 259.2 L523.4 262.0 L520.0 264.7 L517.3 267.6 L514.6 270.6 L511.8 273.5 L509.1 276.5 L506.3 279.5 L504.3 282.6 L502.3 285.7 L500.3 288.9 L498.3 292.1 L496.2 295.2 L495.0 298.5 L493.7 301.8 L492.5 305.1 L491.2 308.4 L489.9 311.8 L489.5 315.2 L489.0 318.6 L488.6 322.0 L488.2 325.4 L487.7 328.9 L488.2 332.3 L488.6 335.8 L489.0 339.2 L489.4 342.7 L489.9 346.2 L491.2 349.7 L492.5 353.1 L493.9 356.6 L495.2 360.0 L496.5 363.6 L498.8 366.9 L501.0 370.3 L503.2 373.6 L505.5 377.0 L507.8 380.5 L510.9 383.7 L514.0 386.9 L517.2 390.1 L520.3 393.4 L523.5 396.6 L527.5 399.6 L531.5 402.6 L535.6 405.6 L539.6 408.7 L543.7 411.7 L548.5 414.4 L553.4 417.1 L558.2 419.8 L563.1 422.6 L568.0 425.3 L573.6 427.6 L579.1 430.0 L584.8 432.3 L590.4 434.7 L596.0 437.0 L602.2 439.0 L608.5 440.9 L614.7 442.8 L621.0 444.7 L627.3 446.7 L634.0 448.1 L640.7 449.5 L647.5 451.0 L654.2 452.4 L661.0 453.8 L668.1 454.7 L675.2 455.7 L682.3 456.6 L689.5 457.5 L696.6 458.4 L703.9 458.7 L711.2 459.1 L718.5 459.5 L725.8 459.8 L733.2 460.2 L740.5 460.0 L747.8 459.8 L755.2 459.6 L762.5 459.3 L769.8 459.1 L777.0 458.4 L784.2 457.6 L791.4 456.8 L798.6 456.1 L805.8 455.3 L812.7 454.0 L819.5 452.7 L826.4 451.4 L833.3 450.1 L840.1 448.8 L846.5 447.0 L852.9 445.2 L859.3 443.4 L865.7 441.6 L872.1 439.8 L877.9 437.6 L883.7 435.3 L889.5 433.1 L895.3 430.8 L901.0 428.6 L906.1 426.0 L911.2 423.3 L916.3 420.7 L921.3 418.1 L926.4 415.5 L930.7 412.5 L934.9 409.6 L939.2 406.6 L943.4 403.7 L947.7 400.8 L951.1 397.6 L954.5 394.4 L957.9 391.2 L961.3 388.0 L964.6 384.9 L967.1 381.5 L969.6 378.1 L972.1 374.8 L974.6 371.4 L977.1 368.1 L978.7 364.6 L980.2 361.2 L981.8 357.7 L983.4 354.3 L984.9 350.9 L985.6 347.4 L986.3 343.9 L986.9 340.4 L987.6 336.9 L988.3 333.5 L988.1 330.0 L987.8 326.6 L987.6 323.1 L987.4 319.7 L987.2 316.3 L986.2 312.9 L985.1 309.6 L984.1 306.2 L983.0 302.9 L982.0 299.6 L980.2 296.4 L978.3 293.1 L976.5 289.9 L974.7 286.8 L972.9 283.6 L970.3 280.5 L967.7 277.5 L965.2 274.5 L962.6 271.5 L960.1 268.5 L956.9 265.7 L953.7 262.9 L950.5 260.1 L947.3 257.4 L944.1 254.6 L940.3 252.1 L936.5 249.5 L932.7 247.0 L929.0 244.5 L925.2 242.0M540.8 640.1 L539.1 643.6 L537.5 647.2 L535.9 650.7 L534.2 654.3 L532.6 657.9 L531.6 661.6 L530.6 665.3 L529.7 669.0 L528.7 672.8 L527.7 676.5 L527.4 680.3 L527.2 684.1 L526.9 688.0 L526.6 691.8 L526.3 695.7 L526.8 699.5 L527.3 703.3 L527.7 707.2 L528.2 711.1 L528.7 715.0 L529.9 718.8 L531.1 722.6 L532.3 726.5 L533.5 730.3 L534.7 734.2 L536.7 737.9 L538.7 741.6 L540.6 745.4 L542.6 749.1 L544.6 752.9 L547.3 756.4 L550.0 760.0 L552.8 763.5 L555.5 767.1 L558.3 770.7 L561.7 773.9 L565.1 777.2 L568.6 780.5 L572.0 783.8 L575.5 787.2 L579.6 790.1 L583.7 793.1 L587.8 796.0 L591.9 799.0 L596.1 802.0 L600.8 804.5 L605.5 807.1 L610.2 809.6 L614.9 812.2 L619.7 814.8 L624.9 816.8 L630.1 818.9 L635.3 821.0 L640.6 823.1 L645.8 825.2 L651.4 826.7 L657.1 828.3 L662.7 829.8 L668.3 831.4 L674.0 832.9 L679.9 833.9 L685.8 834.9 L691.7 835.9 L697.7 836.9 L703.6 837.8 L709.7 838.2 L715.8 838.6 L721.8 839.0 L727.9 839.4 L734.0 839.8 L740.1 839.5 L746.2 839.3 L752.3 839.1 L758.4 838.9 L764.5 838.7 L770.5 837.8 L776.5 837.0 L782.4 836.2 L788.4 835.3 L794.4 834.5 L800.1 833.1 L805.8 831.7 L811.6 830.3 L817.3 828.9 L823.0 827.5 L828.4 825.5 L833.7 823.6 L839.1 821.6 L844.4 819.7 L849.7 817.8 L854.6 815.3 L859.5 812.9 L864.4 810.4 L869.2 808.0 L874.1 805.6 L878.4 802.7 L882.7 799.8 L887.0 797.0 L891.2 794.1 L895.5 791.3 L899.1 788.1 L902.8 784.8 L906.4 781.6 L910.0 778.4 L913.6 775.2 L916.6 771.7 L919.5 768.2 L922.4 764.7 L925.3 761.2 L928.2 757.7 L930.4 754.0 L932.6 750.3 L934.8 746.6 L937.0 742.9 L939.1 739.3 L940.6 735.4 L942.0 731.6 L943.4 727.7 L944.8 723.9 L946.2 720.2 L946.9 716.3 L947.6 712.4 L948.2 708.5 L948.9 704.7 L949.5 700.8 L949.5 696.9 L949.4 693.1 L949.3 689.2 L949.2 685.4 L949.2 681.6 L948.4 677.8 L947.6 674.0 L946.8 670.3 L946.0 666.5 L945.2 662.8 L943.7 659.2 L942.2 655.5 L940.8 651.9 L939.3 648.3 L937.9 644.8 L935.8 641.3M925.2 242.0 L924.8 247.2 L924.4 252.5 L924.0 257.7 L923.6 262.9 L923.2 268.0 L922.9 273.1 L922.5 278.3 L922.1 283.4 L921.7 288.4 L921.3 293.5 L920.9 298.5 L920.6 303.5 L920.2 308.5 L919.8 313.5 L919.4 318.4 L919.0 323.3 L918.7 328.3 L918.3 333.1 L917.9 338.0 L917.6 342.9 L917.2 347.7 L916.8 352.5 L916.5 357.3 L916.1 362.0 L915.7 366.8 L915.4 371.5 L915.0 376.2M771.1 199.1 L771.0 204.2 L771.0 209.3 L770.9 214.4 L770.8 219.5 L770.8 224.5 L770.7 229.5 L770.6 234.5 L770.6 239.5 L770.5 244.5 L770.4 249.4 L770.4 254.3 L770.3 259.2 L770.2 264.1 L770.2 269.0 L770.1 273.8 L770.0 278.6 L770.0 283.4 L769.9 288.2 L769.9 293.0M496.2 295.2 L496.8 300.6 L497.3 306.0 L497.8 311.3 L498.4 316.7 L498.9 322.0 L499.4 327.2 L499.9 332.5 L500.5 337.7 L501.0 342.9 L501.5 348.1 L502.0 353.3 L502.5 358.4 L503.1 363.5 L503.6 368.6 L504.1 373.7 L504.6 378.7 L505.1 383.7 L505.6 388.7 L506.1 393.7 L506.6 398.7 L507.1 403.6 L507.6 408.5 L508.1 413.4 L508.6 418.3 L509.0 423.2 L509.5 428.0 L510.0 432.8 L510.5 437.6 L511.0 442.4 L511.4 447.1 L511.9 451.9 L512.4 456.6 L512.9 461.3 L513.3 466.0 L513.8 470.6M528.2 614.1 L528.6 618.2 L529.0 622.2 L529.4 626.2 L529.8 630.2 L530.2 634.2 L530.6 638.2 L531.0 642.2 L531.4 646.1 L531.8 650.1 L532.2 654.0 L532.6 657.9M523.5 396.6 L524.1 402.3 L524.6 407.9 L525.1 413.5 L525.6 419.0 L526.1 424.6 L526.6 430.1 L527.1 435.5 L527.6 441.0 L528.1 446.4 L528.6 451.8 L529.1 457.2 L529.6 462.5 L530.1 467.8 L530.6 473.1 L531.1 478.4 L531.6 483.6 L532.1 488.9 L532.6 494.0 L533.1 499.2 L533.5 504.4 L534.0 509.5 L534.5 514.6 L535.0 519.7 L535.4 524.7 L535.9 529.7 L536.4 534.7 L536.8 539.7 L537.3 544.7 L537.7 549.6 L538.2 554.5 L538.6 559.4 L539.1 564.3 L539.5 569.1 L540.0 574.0 L540.4 578.8 L540.9 583.6 L541.3 588.3 L541.8 593.1 L542.2 597.8 L542.6 602.5 L543.1 607.2 L543.5 611.8 L543.9 616.4 L544.4 621.1 L544.8 625.7 L545.2 630.2 L545.6 634.8 L546.1 639.3 L546.5 643.8 L546.9 648.3 L547.3 652.8 L547.7 657.3 L548.1 661.7 L548.6 666.1 L549.0 670.5 L549.4 674.9 L549.8 679.3 L550.2 683.6 L550.6 687.9 L551.0 692.2 L551.4 696.5 L551.8 700.8 L552.2 705.0 L552.6 709.3 L553.0 713.5 L553.3 717.7 L553.7 721.9 L554.1 726.0 L554.5 730.2 L554.9 734.3 L555.3 738.4 L555.6 742.5 L556.0 746.6 L556.4 750.6 L556.8 754.7 L557.2 758.7 L557.5 762.7 L557.9 766.7 L558.3 770.7M696.6 458.4 L696.7 464.1 L696.8 469.9 L696.9 475.6 L697.0 481.3 L697.1 486.9 L697.2 492.5 L697.3 498.1 L697.4 503.7 L697.5 509.2 L697.7 514.7 L697.8 520.2 L697.9 525.7 L698.0 531.1 L698.1 536.5 L698.2 541.8 L698.2 547.2 L698.3 552.5 L698.4 557.8 L698.5 563.1 L698.6 568.3 L698.7 573.5 L698.8 578.7 L698.9 583.9 L699.0 589.0 L699.1 594.1 L699.2 599.2 L699.3 604.3 L699.4 609.3 L699.5 614.3 L699.6 619.3 L699.7 624.3 L699.8 629.2 L699.9 634.2 L699.9 639.1 L700.0 643.9 L700.1 648.8 L700.2 653.6 L700.3 658.4 L700.4 663.2 L700.5 668.0 L700.6 672.7 L700.7 677.4 L700.7 682.1 L700.8 686.8 L700.9 691.5 L701.0 696.1 L701.1 700.7 L701.2 705.3 L701.2 709.9 L701.3 714.4 L701.4 718.9 L701.5 723.4 L701.6 727.9 L701.7 732.4 L701.7 736.8 L701.8 741.3 L701.9 745.7 L702.0 750.1 L702.1 754.4 L702.2 758.8 L702.2 763.1 L702.3 767.4 L702.4 771.7 L702.5 776.0 L702.5 780.2 L702.6 784.5 L702.7 788.7 L702.8 792.9 L702.9 797.0 L702.9 801.2 L703.0 805.3 L703.1 809.5 L703.2 813.6 L703.2 817.7 L703.3 821.7 L703.4 825.8 L703.5 829.8 L703.5 833.8 L703.6 837.8M901.0 428.6 L900.6 434.3 L900.2 440.0 L899.8 445.6 L899.4 451.3 L899.0 456.9 L898.6 462.4 L898.2 468.0 L897.8 473.5 L897.4 478.9 L897.0 484.4 L896.6 489.8 L896.3 495.2 L895.9 500.6 L895.5 506.0 L895.1 511.3 L894.7 516.6 L894.3 521.8 L894.0 527.1 L893.6 532.3 L893.2 537.5 L892.9 542.7 L892.5 547.8 L892.1 553.0 L891.8 558.1 L891.4 563.1 L891.0 568.2 L890.7 573.2 L890.3 578.2 L890.0 583.2 L889.6 588.1 L889.3 593.1 L888.9 598.0 L888.6 602.9 L888.2 607.7 L887.9 612.6 L887.5 617.4 L887.2 622.2 L886.8 627.0 L886.5 631.7 L886.1 636.5 L885.8 641.2 L885.5 645.9 L885.1 650.5 L884.8 655.2 L884.5 659.8 L884.2 664.4 L883.8 669.0 L883.5 673.6 L883.2 678.1 L882.8 682.6 L882.5 687.1 L882.2 691.6 L881.9 696.1 L881.6 700.5 L881.3 705.0 L880.9 709.4 L880.6 713.8 L880.3 718.1 L880.0 722.5 L879.7 726.8 L879.4 731.1 L879.1 735.4 L878.8 739.7 L878.5 743.9 L878.2 748.2 L877.9 752.4 L877.6 756.6 L877.3 760.8 L877.0 764.9 L876.7 769.1 L876.4 773.2 L876.1 777.3 L875.8 781.4 L875.5 785.5 L875.2 789.5 L874.9 793.6 L874.6 797.6 L874.3 801.6 L874.1 805.6M988.3 333.5 L987.7 339.0 L987.1 344.5 L986.5 349.9 L986.0 355.3 L985.4 360.7 L984.8 366.1 L984.3 371.4 L983.7 376.7 L983.2 382.0 L982.6 387.3 L982.1 392.5 L981.5 397.7 L981.0 402.9 L980.4 408.1 L979.9 413.2 L979.3 418.4 L978.8 423.5 L978.3 428.6 L977.7 433.6 L977.2 438.7 L976.7 443.7 L976.1 448.7 L975.6 453.6 L975.1 458.6 L974.6 463.5 L974.1 468.4 L973.5 473.3 L973.0 478.1 L972.5 483.0 L972.0 487.8 L971.5 492.6 L971.0 497.4 L970.5 502.1 L970.0 506.9 L969.5 511.6 L969.0 516.3 L968.5 521.0 L968.0 525.6 L967.5 530.3 L967.0 534.9 L966.6 539.5 L966.1 544.0 L965.6 548.6 L965.1 553.1 L964.6 557.7 L964.2 562.2 L963.7 566.7 L963.2 571.1 L962.8 575.6 L962.3 580.0 L961.8 584.4 L961.4 588.8 L960.9 593.2 L960.4 597.5 L960.0 601.9 L959.5 606.2 L959.1 610.5 L958.6 614.8 L958.2 619.0 L957.7 623.3 L957.3 627.5 L956.8 631.7 L956.4 635.9 L956.0 640.1 L955.5 644.3 L955.1 648.4 L954.6 652.5 L954.2 656.6 L953.8 660.7 L953.3 664.8 L952.9 668.9 L952.5 672.9 L952.1 677.0 L951.6 681.0 L951.2 685.0 L950.8 689.0 L950.4 692.9 L950.0 696.9 L949.5 700.8" fill="none" stroke="#c8bf58" stroke-width="1.1"/>
<path d="M602.6 218.8 L602.9 224.0 L603.2 229.2 L603.5 234.3 L603.7 239.4 L604.0 244.5 L604.3 249.6 L604.6 254.6 L604.8 259.7 L605.1 264.7 L605.4 269.7 L605.7 274.6 L605.9 279.6 L606.2 284.5 L606.5 289.4 L606.7 294.3 L607.0 299.2 L607.3 304.0 L607.5 308.9 L607.8 313.7 L608.1 318.5 L608.3 323.2 L608.6 328.0" fill="none" stroke="#3bd23b" stroke-width="1.1"/>

<g fill="none" stroke-width="1.2">
<circle cx="741.5" cy="680" r="96.5" stroke="#a0a0a0"/>
<circle cx="743.5" cy="678" r="70.5" stroke="#555"/>
<path d="M713 614 C740 620 760 640 772 668 C784 700 786 728 773 745" stroke="#e8d840"/>
<path d="M784 622 C760 614 730 628 705 655 C682 682 678 715 700 740" stroke="#c83020"/>
<path d="M669 677 C680 710 710 730 745 733 C780 732 810 712 814 686" stroke="#2828c0"/>
<path d="M741 679V655M741 679L727 664M741 679L718 690" stroke="#666" stroke-width="1"/>
<path d="M741 679L718 690" stroke="#3a9a3a" stroke-width="1.2"/>
</g>
<g>
<ellipse cx="1458" cy="179" rx="33" ry="21" fill="none" stroke="#8e9094" stroke-width="6"/>
<path d="M1439 151L1459 143L1478 157L1477 176L1457 187L1440 172Z" fill="#8c8c8c"/>
<path d="M1439 151L1458 163L1478 157M1458 163L1457 187" stroke="#999" stroke-width="0.6" fill="none"/>
<path d="M1430 200l8 -6M1488 204l-6 -5M1490 163l5 -4" stroke="#bbb" stroke-width="2"/>
</g>
<g stroke-width="1.2" fill="none">
<path d="M57 966V945" stroke="#3030b0"/>
<path d="M57 966L46 951" stroke="#a03030"/>
<path d="M57 966L40 974" stroke="#30a030"/>
</g>
<g fill="none" stroke="#ff3b1d" stroke-width="9.5" stroke-linecap="round" stroke-linejoin="round">
<path d="M716 310 C690 305 650 304 632 309 C620 312 610 316 603 320"/>
<path d="M613 303 L603 320 L637 338"/>
<path d="M790 326 C820 333 851 340 880 352 C905 365 925 385 940 405 C947 413 950 420 953 426"/>
<path d="M949 396 L953 426 L927 425"/>
<path d="M675 358 C650 375 630 388 606 404 C580 422 560 440 545 462 C530 485 520 510 513 548"/>
<path d="M506 513 L513 548 L571 536"/>
<path d="M761 360 C785 380 805 395 815 412 C828 435 834 460 838 490 C842 520 843 555 844 589"/>
<path d="M823 564 L844 589 L874 557"/>
</g>
</svg>
<div class="t" style="left:4px;top:6px;font-size:10.5px;color:#d4d4d4;letter-spacing:0.05px">[ + ] [Perspective ] [Standard ] [Edged Faces ]</div>
<svg class="a" style="left:227px;top:6px" width="14" height="14"><path d="M1 1H13L8 7V13L6 11V7Z" fill="#777"/></svg>
</div>
  <div id="cp"></div>
  <div id="sb">
<div class="a" style="left:4px;top:6px;width:94px;height:20px;background:#dcc6c6;border:1px solid #f4f4f4"></div>
<div class="a" style="left:4px;top:28px;width:94px;height:22px;background:#fff;border:1px solid #ddd"></div>
<div class="t" style="left:9px;top:32px;font-size:11px;color:#111">Array modifier r</div>
<div class="a" style="left:101px;top:4px;width:2px;height:46px;background:#2a2a2a"></div>
<div class="t" style="left:108px;top:11px;font-size:10.5px;color:#e0e0e0">1 Object Selected</div>
<div class="t" style="left:107px;top:35px;font-size:10.5px;color:#e0e0e0">Select faces</div>
<div class="t" style="left:1064px;top:11px;font-size:10.5px;color:#ddd">X:</div>
<div class="a" style="left:1077px;top:9px;width:65px;height:17px;background:#555"></div>
<div class="t" style="left:1080px;top:12px;font-size:10.5px;color:#bbb">0.0</div>
<div class="t" style="left:1145px;top:11px;font-size:10.5px;color:#ddd">Y:</div>
<div class="a" style="left:1158px;top:9px;width:65px;height:17px;background:#555"></div>
<div class="t" style="left:1161px;top:12px;font-size:10.5px;color:#bbb">-0.0</div>
<div class="t" style="left:1226px;top:11px;font-size:10.5px;color:#ddd">Z:</div>
<div class="a" style="left:1240px;top:9px;width:65px;height:17px;background:#555"></div>
<div class="t" style="left:1243px;top:12px;font-size:10.5px;color:#bbb">0.0</div>
<div class="t" style="left:1310px;top:11px;font-size:10.5px;color:#ddd">Grid = 10.0</div>
<div class="a" style="left:1160px;top:30px;width:18px;height:21px;background:#555;border-radius:2px"></div>
<div class="t" style="left:1184px;top:35px;font-size:10.5px;color:#ddd">Enabled:</div>
<div class="a" style="left:1245px;top:31px;width:18px;height:21px;background:#555;border-radius:2px"></div>
<div class="t" style="left:1300px;top:35px;font-size:10.5px;color:#ddd">Add Time Tag</div>
<div class="a" style="left:1442px;top:30px;width:66px;height:17px;background:#555"></div>
<div class="t" style="left:1446px;top:33px;font-size:10.5px;color:#bbb">0</div>
<div class="a" style="left:1543px;top:9px;width:41px;height:40px;background:#555;border-radius:3px"></div>
<div class="a" style="left:1589px;top:9px;width:44px;height:20px;background:#555;border-radius:2px"></div>
<div class="t" style="left:1590px;top:13px;font-size:10.5px;color:#bbb">Auto Key</div>
<div class="a" style="left:1589px;top:31px;width:44px;height:19px;background:#555;border-radius:2px"></div>
<div class="t" style="left:1592px;top:35px;font-size:10.5px;color:#bbb">Set Key</div>
<div class="a" style="left:1638px;top:9px;width:110px;height:19px;background:#5a5a5a;border-radius:2px"></div>
<div class="t" style="left:1642px;top:12px;font-size:10.5px;color:#ccc">Selected</div>
<div class="a" style="left:1663px;top:31px;width:85px;height:19px;background:#555;border-radius:2px"></div>
<div class="t" style="left:1675px;top:35px;font-size:10.5px;color:#ccc">Key Filters...</div>
</div>
</div>
<div class="a" style="left:0;top:0">
<style>
.ro{position:absolute;background:#4b4b4b;border:1px solid #3a3a3a;border-radius:2px}
.rh{position:absolute;font-size:11px;font-weight:bold;color:#e8e8e8;white-space:nowrap}
.gb{position:absolute;border:1px solid #333;border-radius:2px}
.lb{position:absolute;font-size:10.5px;color:#d8d8d8;white-space:nowrap}
.fld{position:absolute;background:#5a5a5a}
.ib{position:absolute;background:#3b3b3b}
</style>
<!-- grip line -->
<div class="a" style="left:1519px;top:112px;width:365px;height:3px;background:repeating-linear-gradient(90deg,#8a8a8a 0 1px,transparent 1px 2px)"></div>
<!-- tabs -->
<div class="a" style="left:1517px;top:118px;width:190px;height:27px;background:#3d3d3d"></div>
<div class="a" style="left:1548px;top:118px;width:31px;height:27px;background:#4a4a4a"></div>
<!-- name field -->
<div class="fld" style="left:1519px;top:150px;width:158px;height:19px;background:#5c5c5c"></div>
<div class="lb" style="left:1524px;top:154px;color:#e4e4e4">Sphere001</div>
<div class="a" style="left:1682px;top:151px;width:19px;height:18px;background:#e2e39c;border:1px solid #222"></div>
<div class="fld" style="left:1519px;top:175px;width:182px;height:19px;background:#626262"></div>
<div class="lb" style="left:1523px;top:179px;color:#d4d4d4">Modifier List</div>
<!-- stack -->
<div class="a" style="left:1520px;top:200px;width:181px;height:122px;background:#3b3b3b;border:2px solid #ececec"></div>
<div class="a" style="left:1522px;top:217px;width:177px;height:1px;background:#5a5a5a"></div>
<div class="a" style="left:1522px;top:233px;width:177px;height:1px;background:#5a5a5a"></div>
<div class="a" style="left:1559px;top:202px;width:140px;height:15px;border:1px solid #7090d0"></div>
<div class="lb" style="left:1562px;top:203px;color:#e8e8e8;font-size:10px">Unwrap UVW</div>
<div class="lb" style="left:1541px;top:220px;color:#e8e8e8;font-size:10px">Editable Poly</div>
<!-- left rollouts -->
<div class="ro" style="left:1519px;top:367px;width:172px;height:122px"></div>
<div class="rh" style="left:1537px;top:370px">Selection</div>
<div class="lb" style="background:#4b4b4b;padding-right:3px;z-index:2;left:1535px;top:426px">Modify Selection:</div>
<div class="gb" style="left:1530px;top:432px;width:152px;height:48px"></div>
<div class="ro" style="left:1519px;top:487px;width:172px;height:166px"></div>
<div class="gb" style="left:1530px;top:488px;width:153px;height:150px"></div>
<div class="fld" style="left:1651px;top:541px;width:23px;height:13px;background:#555"></div>
<div class="fld" style="left:1651px;top:613px;width:22px;height:13px;background:#555"></div>
<div class="ro" style="left:1519px;top:658px;width:172px;height:83px"></div>
<div class="fld" style="left:1651px;top:687px;width:16px;height:14px;background:#555"></div>
<div class="fld" style="left:1651px;top:715px;width:16px;height:13px;background:#555"></div>
<div class="ro" style="left:1519px;top:745px;width:172px;height:135px"></div>
<div class="fld" style="left:1645px;top:768px;width:29px;height:24px;background:#555;border-radius:3px"></div>
<div class="fld" style="left:1645px;top:799px;width:29px;height:24px;background:#555;border-radius:3px"></div>
<div class="ro" style="left:1519px;top:885px;width:172px;height:105px"></div>
<div class="fld" style="left:1645px;top:902px;width:31px;height:24px;background:#555;border-radius:3px"></div>
<div class="fld" style="left:1645px;top:928px;width:31px;height:24px;background:#555;border-radius:3px"></div>
<div class="lb" style="background:#4b4b4b;padding-right:3px;z-index:2;left:1537px;top:951px">Channel:</div>
<div class="gb" style="left:1533px;top:957px;width:144px;height:33px;border-bottom:none"></div>
<div class="lb" style="left:1555px;top:972px">Map Channel:</div>
<div class="fld" style="left:1626px;top:970px;width:45px;height:16px;background:#555"></div>
<div class="lb" style="left:1629px;top:972px;color:#bbb">1</div>
<div class="a" style="left:1694px;top:367px;width:7px;height:623px;background:#3a3a3a"></div>
<div class="a" style="left:1695px;top:369px;width:5px;height:582px;background:#4d4d4d;border-radius:2px"></div>
<!-- right rollouts -->
<div class="ro" style="left:1705px;top:150px;width:169px;height:116px"></div>
<div class="rh" style="left:1721px;top:153px">Peel</div>
<div class="ib" style="left:1736px;top:175px;width:108px;height:28px"></div>
<div class="lb" style="background:#4b4b4b;padding-right:3px;z-index:2;left:1720px;top:207px">Seams:</div>
<div class="gb" style="left:1715px;top:213px;width:147px;height:42px"></div>
<div class="ib" style="left:1736px;top:222px;width:108px;height:27px"></div>
<div class="ro" style="left:1705px;top:270px;width:169px;height:158px"></div>
<div class="rh" style="left:1721px;top:273px">Projection</div>
<div class="ib" style="left:1738px;top:295px;width:110px;height:28px"></div>
<div class="lb" style="background:#4b4b4b;padding-right:3px;z-index:2;left:1721px;top:329px">Align Options:</div>
<div class="gb" style="left:1717px;top:335px;width:143px;height:80px"></div>
<div class="ib" style="left:1722px;top:344px;width:134px;height:27px"></div>
<div class="fld" style="left:1724px;top:378px;width:45px;height:27px;background:#575757;border-radius:3px"></div>
<div class="lb" style="left:1739px;top:385px;color:#cfcfcf">Fit</div>
<div class="fld" style="left:1773px;top:378px;width:47px;height:27px;background:#575757;border-radius:3px"></div>
<div class="lb" style="left:1779px;top:385px;color:#cfcfcf">Center</div>
<div class="ib" style="left:1825px;top:378px;width:28px;height:27px"></div>
<div class="ro" style="left:1705px;top:430px;width:169px;height:64px"></div>
<div class="rh" style="left:1721px;top:432px">Wrap</div>
<div class="ro" style="left:1705px;top:498px;width:169px;height:181px"></div>
<div class="rh" style="left:1721px;top:501px">Configure</div>
<div class="lb" style="background:#4b4b4b;padding-right:3px;z-index:2;left:1721px;top:525px">Display:</div>
<div class="gb" style="left:1717px;top:531px;width:143px;height:80px"></div>
<div class="lb" style="left:1739px;top:549px">Map Seams</div>
<div class="lb" style="left:1739px;top:570px">Peel Seams</div>
<div class="lb" style="left:1742px;top:592px">Thick</div>
<div class="lb" style="left:1803px;top:592px">Thin</div>
<div class="lb" style="left:1741px;top:622px">Prevent Reflattening</div>
<div class="lb" style="left:1741px;top:645px">Normalize Map</div>
<div class="a" style="left:1878px;top:145px;width:8px;height:846px;background:#3a3a3a"></div>
<div class="a" style="left:1879px;top:147px;width:6px;height:842px;background:#3e3e3e;border-radius:2px"></div>
</div>

<svg class="a" style="left:1500px;top:110px" width="400" height="890" viewBox="1500 110 400 890">
<defs>
<g id="grip"><path d="M0 0h1.5v1.5h-1.5zM3 0h1.5v1.5h-1.5zM6 0h1.5v1.5h-1.5zM0 3h1.5v1.5h-1.5zM3 3h1.5v1.5h-1.5zM6 3h1.5v1.5h-1.5zM0 6h1.5v1.5h-1.5zM3 6h1.5v1.5h-1.5zM6 6h1.5v1.5h-1.5z" fill="#707070"/></g>
<path id="tri" d="M0 0H8L4 5Z" fill="#a8a8a8"/>
</defs>
<!-- tab icons -->
<path d="M1524 132H1540M1532 124V140" stroke="#c8c8c8" stroke-width="2"/>
<g stroke="#4cb8c8" fill="none" stroke-width="1.6"><rect x="1555" y="124" width="16" height="16"/><path d="M1558 138Q1559 127 1569 126"/></g>
<rect x="1553" y="122" width="4" height="4" fill="#4cb8c8"/><rect x="1569" y="122" width="4" height="4" fill="#4cb8c8"/><rect x="1553" y="138" width="4" height="4" fill="#4cb8c8"/><rect x="1569" y="138" width="4" height="4" fill="#4cb8c8"/>
<rect x="1588" y="123" width="12" height="5" fill="#c8c8c8"/>
<path d="M1594 128V132M1587 140V133H1601V140" fill="none" stroke="#4cb8c8" stroke-width="1.6"/>
<circle cx="1625" cy="131" r="7" fill="#c8c8c8"/><path d="M1617 126A8 8 0 0 0 1617 137M1614 127A9 9 0 0 0 1614 136" stroke="#4cb8c8" fill="none" stroke-width="1"/>
<rect x="1648" y="124" width="16" height="11" fill="#c8c8c8"/><rect x="1652" y="137" width="8" height="2" fill="#c8c8c8"/>
<path d="M1680 124l9 10l3 3" stroke="#c8c8c8" stroke-width="2.5" fill="none"/><circle cx="1681" cy="125" r="3.5" fill="none" stroke="#c8c8c8" stroke-width="2"/>
<!-- modifier dropdown arrow -->
<use href="#tri" x="1687" y="182"/>
<!-- stack icons -->
<path d="M1527 209Q1533 202 1540 209Q1533 216 1527 209Z" fill="none" stroke="#ddd" stroke-width="1.4"/><circle cx="1533.5" cy="209" r="2" fill="#ddd"/>
<path d="M1548 205L1553 209L1548 213Z M1528 222L1533 226L1528 230Z" fill="#ddd"/>
<!-- icon row -->
<path d="M1526 346L1531 341M1530 336L1537 343M1532 334L1537 339L1535 341L1531 338Z" stroke="#c8c8c8" stroke-width="2" fill="none"/>
<path d="M1548 334V347M1583 334V347M1641 334V347" stroke="#222" stroke-width="1.6"/>
<rect x="1563" y="333" width="5" height="14" rx="2" fill="none" stroke="#c8c8c8" stroke-width="1.3"/><rect x="1564" y="340" width="3" height="6" fill="#4cb8c8"/>
<circle cx="1597" cy="337" r="4" fill="#3a3a3a" stroke="#555"/><circle cx="1602" cy="343" r="4" fill="none" stroke="#555"/>
<path d="M1619 336H1629M1620 338V347H1628V338M1622 339V346M1624 339V346M1626 339V346" stroke="#c8c8c8" stroke-width="1.2" fill="none"/>
<rect x="1651" y="334" width="13" height="13" fill="none" stroke="#c8c8c8" stroke-width="1.5"/><path d="M1656 343L1666 332" stroke="#f0a830" stroke-width="2.5"/>
<!-- divider -->
<path d="M1524 360.5H1600M1620 360.5H1697" stroke="#5a5a5a"/>
<path d="M1603 359H1616M1603 362H1616" stroke="#8a8a8a" stroke-dasharray="1 1"/>
<!-- Selection rollout -->
<use href="#tri" x="1524" y="374"/>
<use href="#grip" x="1678" y="372"/>
<rect x="1538" y="395" width="54" height="26" fill="#3d3d3d"/>
<path d="M1541 407h6M1544 404v6M1555 398h6M1558 395v6M1551 414h6M1554 411v6" stroke="#4cb8c8" stroke-width="1.8"/>
<path d="M1568 409L1587 399L1582 418Z" fill="none" stroke="#4cb8c8" stroke-width="2"/>
<rect x="1593" y="395" width="25" height="26" rx="2" fill="#5e8fd8"/>
<rect x="1595" y="398" width="21" height="20" fill="#4cb8c8"/>
<rect x="1648" y="394" width="25" height="27" fill="#3d3d3d"/>
<path d="M1652 399L1656 397L1660 399V403L1656 405L1652 403Z" fill="#d8d8d8"/><path d="M1652 399L1656 401L1660 399M1656 401V405" stroke="#555" stroke-width="0.8" fill="none"/><path d="M1662 399L1666 397L1670 399V403L1666 405L1662 403Z" fill="#d8d8d8"/><path d="M1662 399L1666 401L1670 399M1666 401V405" stroke="#555" stroke-width="0.8" fill="none"/><path d="M1656 407L1660 405L1664 407V411L1660 413L1656 411Z" fill="#d8d8d8"/><path d="M1656 407L1660 409L1664 407M1660 409V413" stroke="#555" stroke-width="0.8" fill="none"/>
<path d="M1666 405V416L1669 413L1672 418L1673 417L1671 412L1674 412Z" fill="#f0a830"/>
<rect x="1538" y="441" width="54" height="26" fill="#3d3d3d"/>
<rect x="1541" y="445" width="19" height="18" fill="none" stroke="#4cb8c8" stroke-width="1.6" stroke-dasharray="3 2"/>
<rect x="1541" y="455" width="8" height="8" fill="#d8d8d8"/><path d="M1553 448v6M1550 451h6" stroke="#d8d8d8" stroke-width="1.6"/>
<rect x="1568" y="449" width="14" height="14" fill="none" stroke="#4cb8c8" stroke-width="1.6" stroke-dasharray="3 2"/>
<rect x="1568" y="455" width="8" height="8" fill="#d8d8d8"/><path d="M1582 446h5" stroke="#d8d8d8" stroke-width="1.6"/>
<rect x="1621" y="441" width="52" height="26" fill="#3d3d3d"/>
<path d="M1623 444h7v4h-7zM1631 444h7v4h-7zM1639 444h7v4h-7zM1623 458h7v4h-7zM1631 458h7v4h-7zM1639 458h7v4h-7z" fill="#222"/>
<path d="M1650 445h5v18h-5zM1664 445h5v18h-5z" fill="#222"/><rect x="1657" y="445" width="5" height="18" fill="none" stroke="#222"/>
<!-- left column lower rollouts spinners / grips -->
<use href="#grip" x="1678" y="662"/><use href="#grip" x="1678" y="749"/><use href="#grip" x="1678" y="888"/>
<path d="M1665 546h6l-3 -3.5zM1665 549h6l-3 3.5zM1665 618h6l-3 -3.5zM1665 621h6l-3 3.5zM1659 692h6l-3 -3.5zM1659 695h6l-3 3.5zM1659 720h6l-3 -3.5zM1659 723h6l-3 3.5zM1658 976h6l-3 -3.5zM1658 979h6l-3 3.5z" fill="#ddd"/>
<circle cx="1545.5" cy="978" r="4.5" fill="#ddd"/>
<!-- Peel -->
<use href="#tri" x="1709" y="156"/>
<use href="#grip" x="1861" y="155"/>
<rect x="1736" y="175" width="108" height="27" fill="#3b3b3b"/>
<g fill="#d8d8d8"><circle cx="1749.5" cy="188" r="10.5"/><circle cx="1776.5" cy="188" r="10.5"/><circle cx="1803.5" cy="188" r="10.5"/></g>
<path d="M1740 190Q1749 184 1756 181M1767 190Q1776 184 1783 181M1794 190Q1803 184 1810 181" stroke="#3b3b3b" stroke-width="2.5" fill="none"/>
<path d="M1754 186L1751 192H1755L1752 198" stroke="#4cb8c8" stroke-width="2" fill="none"/>
<path d="M1806 196A5 5 0 0 1 1812 190" stroke="#4cb8c8" stroke-width="2.5" fill="none"/>
<path d="M1823 178Q1830 181 1838 178L1840 183Q1836 188 1839 196L1835 199Q1830 196 1824 199L1821 195Q1824 188 1820 183Z" fill="#d8d8d8"/>
<rect x="1736" y="221" width="108" height="27" fill="#3b3b3b"/>
<path d="M1738 229H1760" stroke="#4cb8c8" stroke-width="1.8" stroke-dasharray="3 2"/>
<path d="M1749 244L1759 234" stroke="#f0a830" stroke-width="3"/>
<path d="M1768 225V233H1784V244" stroke="#4cb8c8" stroke-width="1.8" stroke-dasharray="3 2" fill="none"/>
<rect x="1766" y="223" width="4" height="3" fill="#ddd"/><rect x="1782" y="242" width="4" height="3" fill="#ddd"/>
<rect x="1793" y="223" width="3" height="23" fill="#3a3a3a" stroke="#555" stroke-width="0.8"/><path d="M1798 234h6v-3l4 4l-4 4v-3h-6z" fill="#6a6a6a"/><rect x="1810" y="223" width="3" height="23" fill="#2a2a2a"/>
<rect x="1820" y="224" width="20" height="20" fill="none" stroke="#4cb8c8" stroke-width="1.8" stroke-dasharray="3 2"/>
<path d="M1824 228h12v12h-12z" fill="#d8d8d8"/><path d="M1828 228v12M1832 228v12M1824 232h12M1824 236h12" stroke="#3b3b3b" stroke-width="1"/>
<path d="M1833 235V246L1836 243L1839 248L1840 247L1838 242L1842 242Z" fill="#f0a830"/>
<!-- Projection -->
<use href="#tri" x="1709" y="276"/>
<use href="#grip" x="1861" y="275"/>
<rect x="1738" y="295" width="110" height="28" fill="#3b3b3b"/>
<path d="M1742 315L1747 306H1757L1762 315Z" fill="#d8d8d8"/>
<rect x="1767" y="296" width="25" height="26" rx="2" fill="#5e8fd8"/>
<path d="M1772 301V317A7.5 3 0 0 0 1787 317V301A7.5 3 0 0 0 1772 301Z" fill="#d8d8d8"/><ellipse cx="1779.5" cy="301" rx="7.5" ry="3" fill="none" stroke="#5e8fd8"/>
<circle cx="1806" cy="309" r="10" fill="#d8d8d8"/>
<path d="M1824 303L1833 299L1842 303V314L1833 319L1824 314Z" fill="#d8d8d8"/><path d="M1824 303L1833 307L1842 303M1833 307V319" stroke="#3b3b3b" fill="none"/>
<rect x="1722" y="344" width="134" height="27" fill="#3b3b3b"/>
<text x="1724" y="366" font-size="22" font-weight="bold" fill="#e0e0e0" font-family="Liberation Sans">X</text>
<text x="1751" y="366" font-size="22" font-weight="bold" fill="#e0e0e0" font-family="Liberation Sans">Y</text>
<text x="1779" y="366" font-size="22" font-weight="bold" fill="#e0e0e0" font-family="Liberation Sans">Z</text>
<path d="M1816 348V362M1812 352L1816 347L1820 352M1816 362L1808 366M1816 362L1825 366" stroke="#e0e0e0" stroke-width="2.2" fill="none"/>
<path d="M1834 349h-3v3M1850 349h3v3M1834 367h-3v-3M1850 367h3v-3" stroke="#e0e0e0" stroke-width="2" fill="none"/>
<path d="M1829 347V369" stroke="#4cb8c8" stroke-width="1.6" stroke-dasharray="3 2"/>
<path d="M1845 398V393Q1845 386 1836 386H1832" stroke="#e0e0e0" stroke-width="3" fill="none"/><path d="M1829 386L1835 380V392Z" fill="#e0e0e0"/>
<!-- Wrap -->
<use href="#tri" x="1709" y="435"/>
<use href="#grip" x="1861" y="434"/>
<rect x="1750" y="454" width="27" height="27" fill="#3b3b3b"/>
<path d="M1755 475Q1760 466 1766 468Q1772 469 1772 460" stroke="#d8d8d8" stroke-width="1.6" fill="none"/>
<rect x="1753" y="473" width="4" height="4" fill="none" stroke="#ddd"/><rect x="1764" y="466" width="4" height="4" fill="none" stroke="#4cb8c8"/><rect x="1770" y="457" width="4" height="4" fill="none" stroke="#4cb8c8"/>
<rect x="1806" y="454" width="27" height="27" fill="#3b3b3b"/>
<path d="M1811 459H1827L1829 465L1819 477L1811 470Z" fill="none" stroke="#777" stroke-width="1.6"/>
<!-- Configure -->
<use href="#tri" x="1709" y="504"/>
<use href="#grip" x="1861" y="503"/>
<g fill="#555"><rect x="1724" y="548" width="12" height="12"/><rect x="1724" y="569" width="12" height="12"/><rect x="1726" y="622" width="12" height="12"/><rect x="1726" y="645" width="12" height="12"/></g>
<path d="M1726 554l3 3l5 -6M1726 575l3 3l5 -6M1728 651l3 3l5 -6" stroke="#e0e0e0" stroke-width="1.6" fill="none"/>
<circle cx="1732" cy="597" r="6" fill="#555"/><circle cx="1732" cy="597" r="3.5" fill="#e0e0e0"/>
<circle cx="1793" cy="597" r="6" fill="#555"/>
</svg>

<svg class="a" style="left:0;top:0" width="1920" height="112" viewBox="0 0 1920 112">
<g fill="none" stroke-linecap="butt">
<path d="M36 81V106M38 81V106" stroke="#8a8a8a" stroke-width="1" stroke-dasharray="1 1"/>
<path d="M1350 80V107M1352 80V107M1638 80V107M1640 80V107" stroke="#8a8a8a" stroke-width="1" stroke-dasharray="1 1"/>
<path d="M106 85V100M205 85V100M401 85V100M630 85V100M697 85V100M826 85V100M979 85V100M1047 85V100M1114 85V100M1214 85V100M1250 85V100" stroke="#1e1e1e" stroke-width="1.6"/>
</g>
<!-- undo/redo -->
<g fill="none" stroke="#d6d6d6" stroke-width="3.2">
<path d="M50 90H60A6 6 0 0 1 60 101H56"/>
<path d="M93 90H83A6 6 0 0 0 83 101H87"/>
</g>
<path d="M46 90L53 84V96Z M97 90L90 84V96Z" fill="#d6d6d6"/>
<!-- links -->
<g fill="none" stroke="#d6d6d6" stroke-width="2.6">
<rect x="-8" y="-3.5" width="13" height="7" rx="3.5" transform="translate(120 96) rotate(-45)"/>
<rect x="-5" y="-3.5" width="13" height="7" rx="3.5" transform="translate(128 88) rotate(-45)"/>
<path d="M147 95 l-2 2 a3.5 3.5 0 0 0 5 5 l2 -2 M157 87 l2 -2 a3.5 3.5 0 0 1 5 5 l-2 2" stroke-width="2.6"/>
<path d="M176 95 q4 -3 8 0 q4 3 8 0 M176 99 q4 -3 8 0 q4 3 8 0 M176 103 q4 -3 8 0 q4 3 8 0"/>
</g>
<path d="M149 86l5 5M156 93l5 5" stroke="#4cb8c8" stroke-width="2.2"/>
<g fill="none" stroke="#e8a830" stroke-width="2.2">
<rect x="-5" y="-2.5" width="9" height="5" rx="2.5" transform="translate(187 92) rotate(-55)"/>
<rect x="-3" y="-2.5" width="9" height="5" rx="2.5" transform="translate(191 86) rotate(-55)"/>
</g>
<!-- All dropdown -->
<rect x="208" y="80" width="66" height="19" fill="#5a5a5a"/>
<text x="212" y="94" font-size="11" fill="#c8c8c8">All</text>
<path d="M261 89H268L264.5 93Z" fill="#ddd"/>
<!-- select object -->
<rect x="279.5" y="81.5" width="17" height="17" fill="#3c3c3c" stroke="#2a2a2a"/>
<path d="M293 92 V103 L296 100 L299 104 L300 103 L298 99 L302 99Z" fill="#3a3a3a" stroke="#6a6a6a" stroke-width="0.8"/>
<!-- select by name -->
<path d="M310 83H330M310 87H328M310 91H330M310 95H324" stroke="#dcdcdc" stroke-width="2.2"/>
<path d="M322 93 V104 L325 101 L328 105 L330 104 L328 100 L332 100Z" fill="#f0a830"/>
<!-- rect select -->
<rect x="342" y="82" width="19" height="18" fill="none" stroke="#4cb8c8" stroke-width="2" stroke-dasharray="4 2.5"/>
<rect x="372" y="82" width="14" height="17" fill="none" stroke="#dcdcdc" stroke-width="2" stroke-dasharray="4 2.5"/>
<rect x="384" y="87" width="10" height="10" fill="#4cb8c8"/>
<!-- move -->
<path d="M420 82 L425 88 H422 V91 H425 V88 L431 93 L425 98 V95 H422 V98 H425 L420 104 L415 98 H418 V95 H415 V98 L409 93 L415 88 V91 H418 V88 H415Z" fill="#dcdcdc"/>
<!-- rotate selected -->
<rect x="436" y="78" width="29" height="29" rx="2" fill="#5e8fd8"/>
<path d="M457 88 A8 8 0 1 0 458 98" fill="none" stroke="#e6e6e6" stroke-width="2.6"/>
<path d="M452 85 L461 83 L459 92Z" fill="#e6e6e6"/>
<!-- scale -->
<rect x="471" y="82" width="20" height="18" fill="none" stroke="#4cb8c8" stroke-width="2" stroke-dasharray="4 2.5"/>
<rect x="471" y="92" width="9" height="9" fill="#dcdcdc"/>
<path d="M479 88H485V94" fill="none" stroke="#4cb8c8" stroke-width="2"/>
<!-- placement -->
<circle cx="511" cy="95" r="9" fill="#dcdcdc"/>
<circle cx="517" cy="85" r="5" fill="#4cb8c8"/>
<path d="M510 94L516 87" stroke="#f0a830" stroke-width="2"/>
<!-- View dropdown -->
<rect x="529" y="80" width="65" height="19" fill="#5a5a5a"/>
<text x="533" y="94" font-size="11" fill="#c8c8c8">View</text>
<path d="M582 89H589L585.5 93Z" fill="#ddd"/>
<!-- pivot -->
<path d="M600 81H610V101H600Z M611 81H621V91H611Z" fill="#dcdcdc"/>
<path d="M605 97V105M601 101H609M616 87V95M612 91H620" stroke="#4cb8c8" stroke-width="2"/>
<!-- select manipulate -->
<path d="M637 92H658M647 85V103" stroke="#dcdcdc" stroke-width="2.2"/>
<rect x="645" y="81" width="4" height="4" fill="#4cb8c8"/>
<!-- keyboard override selected -->
<rect x="664.5" y="78.5" width="28" height="28" rx="2" fill="#5e8fd8"/>
<rect x="668" y="82" width="21" height="21" rx="2" fill="#dedede"/>
<path d="M678.5 86L683 91H680V94H677V91H674Z" fill="#333"/>
<!-- snaps -->
<text x="704" y="103" font-size="24" font-weight="bold" fill="#d6d6d6" font-family="Liberation Sans">3</text>
<g fill="none" stroke="#e2a838" stroke-width="2.2" stroke-dasharray="5 1.2">
<path d="M716 91L721 85A3.8 3.8 0 0 1 727 90L722 96"/>
<path d="M747 91L752 85A3.8 3.8 0 0 1 758 90L753 96"/>
<path d="M777 91L782 85A3.8 3.8 0 0 1 788 90L783 96"/>
<path d="M807 91L812 85A3.8 3.8 0 0 1 818 90L813 96"/>
</g>
<path d="M737 84V102H755M737 91Q746 92 747 102" fill="none" stroke="#d6d6d6" stroke-width="2"/>
<circle cx="771" cy="88" r="3" fill="none" stroke="#d6d6d6" stroke-width="2"/><circle cx="783" cy="100" r="3" fill="none" stroke="#d6d6d6" stroke-width="2"/>
<path d="M772 104L784 85" stroke="#d6d6d6" stroke-width="2"/>
<path d="M798 92L803 84L808 92Z M798 96L803 104L808 96Z" fill="#d6d6d6"/>
<!-- named sel -->
<text x="834" y="102" font-size="18" fill="#d6d6d6">{</text>
<text x="846" y="102" font-size="18" fill="#d6d6d6">}</text>
<path d="M845 96L854 84" stroke="#f0a830" stroke-width="2.5"/>
<rect x="861" y="80" width="112" height="19" fill="#5a5a5a"/>
<text x="864" y="93" font-size="10.5" fill="#c8c8c8" textLength="95">Create Selection Set</text>
<path d="M962 88H968L965 92Z" fill="#ddd"/>
<!-- mirror align -->
<path d="M987 83L994 87V101L987 97Z" fill="#dcdcdc"/>
<path d="M997 82V104" stroke="#dcdcdc" stroke-width="1.6" stroke-dasharray="2 2"/>
<path d="M1007 83L1000 87V101L1007 97Z" fill="#4cb8c8"/>
<path d="M1018 82V104" stroke="#4cb8c8" stroke-width="1.6" stroke-dasharray="2 2"/>
<rect x="1022" y="83" width="12" height="7" fill="#dcdcdc"/><rect x="1022" y="94" width="15" height="7" fill="#dcdcdc"/>
<!-- explorers -->
<rect x="1055.5" y="82.5" width="19" height="20" fill="none" stroke="#dcdcdc" stroke-width="2"/>
<path d="M1058 86H1072M1058 90H1060M1062 90H1072M1058 94H1060M1062 94H1072M1058 98H1060M1062 98H1072" stroke="#dcdcdc" stroke-width="2"/>
<rect x="1086.5" y="82.5" width="19" height="20" fill="none" stroke="#dcdcdc" stroke-width="2"/>
<path d="M1090 90L1096 87L1102 90L1096 93Z M1090 94L1096 97L1102 94 M1090 98L1096 101L1102 98" fill="#dcdcdc" stroke="#dcdcdc" stroke-width="1.5"/>
<rect x="1122" y="82" width="21" height="21" fill="#dcdcdc"/>
<path d="M1125 93H1130M1133 93H1139M1125 98H1130M1133 98H1139" stroke="#444" stroke-width="2"/>
<path d="M1135 82V86H1143" fill="none" stroke="#444" stroke-width="1.2"/>
<rect x="1153" y="82" width="21" height="21" fill="#dcdcdc"/>
<path d="M1153 86H1174" stroke="#444" stroke-width="1.2"/>
<path d="M1156 96q3 -6 6 0t6 0" fill="none" stroke="#4cb8c8" stroke-width="2.4"/>
<path d="M1184 82H1205M1184 102H1205" stroke="#dcdcdc" stroke-width="3"/>
<path d="M1184 101H1205" stroke="#4cb8c8" stroke-width="3"/>
<path d="M1194.5 86V96M1190 92L1194.5 97L1199 92" fill="none" stroke="#4cb8c8" stroke-width="2.6"/>
<rect x="1220" y="82" width="22" height="21" fill="#dcdcdc"/>
<path d="M1220 86H1242" stroke="#444" stroke-width="1.2"/>
<circle cx="1227" cy="95" r="4" fill="none" stroke="#444" stroke-width="1.5"/>
<path d="M1233 91H1240M1233 95H1240M1233 99H1240" stroke="#444" stroke-width="1.5"/>
<!-- render -->
<path d="M1258 90 L1264 99 H1274 L1277 91 Q1268 86 1258 90Z" fill="#dcdcdc"/>
<circle cx="1273" cy="98" r="5" fill="none" stroke="#f0a830" stroke-width="2.5"/>
<rect x="1288" y="82" width="22" height="21" fill="#4cb8c8"/>
<path d="M1288 85H1310" stroke="#dcdcdc" stroke-width="3"/>
<path d="M1292 92 L1297 100 H1304 L1307 93 Q1299 88 1292 92Z" fill="#dcdcdc"/>
<path d="M1319 90 L1325 99 H1335 L1338 91 Q1329 86 1319 90Z" fill="#dcdcdc"/>
<path d="M1337 92L1333 98H1337L1334 104" fill="none" stroke="#4cb8c8" stroke-width="2"/>
<!-- path dropdown -->
<rect x="1356" y="78" width="161" height="29" fill="#646464"/>
<text x="1360" y="97" font-size="11.5" fill="#c8c8c8" textLength="139" lengthAdjust="spacingAndGlyphs">C:\Users\CHA...3ds Max 2024</text>
<path d="M1502 91H1509L1505.5 95Z" fill="#ddd"/>
<!-- project -->
<path d="M1525 84H1541V100H1527Z" fill="#dcdcdc"/><circle cx="1540" cy="100" r="4" fill="#f0a830"/>
<path d="M1554 84H1570V100H1556Z" fill="#dcdcdc"/><rect x="1563" y="95" width="11" height="8" fill="#f0a830"/>
<path d="M1583 84H1599V100H1585Z" fill="#dcdcdc"/><path d="M1589 92H1597V97H1589Z M1594 99H1602V103H1594Z" fill="#f0a830"/>
<path d="M1610 84H1626V100H1612Z" fill="#dcdcdc"/><path d="M1616 92H1621V96H1616Z M1622 97H1628V101H1622Z" fill="#f0a830"/>
<!-- save etc -->
<rect x="1645" y="79" width="27" height="27" rx="2" fill="#5e8fd8"/>
<path d="M1650 84H1666L1668 86V101H1650Z" fill="#cfcfcf"/>
<rect x="1654" y="84" width="9" height="5" fill="#5e8fd8"/><rect x="1653" y="93" width="12" height="8" fill="#5e8fd8"/>
<circle cx="1665" cy="100" r="5" fill="#4cb8c8"/>
<circle cx="1688.5" cy="93" r="10" fill="none" stroke="#b8b8b8" stroke-width="2"/>
<text x="1681" y="98" font-size="12" fill="#cfcfcf">21</text>
<path d="M1713 97 A9 9 0 1 1 1729 90" fill="none" stroke="#cfcfcf" stroke-width="2"/>
<circle cx="1720" cy="92" r="5" fill="#4cb8c8"/>
</svg>

<svg class="a" style="left:1000px;top:993px" width="890" height="55" viewBox="1000 993 890 55">
<path d="M1023 1005v-3h4M1037 1005v-3h-4M1023 1015v3h4M1037 1015v3h-4" stroke="#ddd" stroke-width="1.5" fill="none"/><path d="M1026 1013Q1030 1007 1034 1013Z" fill="#4cb8c8"/><circle cx="1030" cy="1007" r="1.5" fill="#4cb8c8"/>
<path d="M1050 1009h10v9h-10z" fill="#ddd"/><path d="M1052 1009v-3a3 3 0 0 1 6 0v3" stroke="#ddd" stroke-width="1.8" fill="none"/>
<rect x="1074" y="1003" width="13" height="13" fill="none" stroke="#ddd" stroke-width="1.4"/><circle cx="1080.5" cy="1009.5" r="3.5" fill="none" stroke="#ddd" stroke-width="1.4"/><path d="M1074 1009.5h3M1084 1009.5h3M1080.5 1003v3M1080.5 1013v3" stroke="#ddd" stroke-width="1.2"/>
<path d="M1167.0 1006.0h5.0l-2.5 -3.0zM1167.0 1012.0h5.0l-2.5 3.0zM1248.0 1006.0h5.0l-2.5 -3.0zM1248.0 1012.0h5.0l-2.5 3.0zM1329.0 1006.0h5.0l-2.5 -3.0zM1329.0 1012.0h5.0l-2.5 3.0zM1533.0 1027.0h5.0l-2.5 -3.0zM1533.0 1033.0h5.0l-2.5 3.0z" fill="#ddd"/>
<path d="M1186 1025V1040M1303 1025V1040M1466 1024V1039M1453 1003V1017M1537 1003V1017" stroke="#1e1e1e" stroke-width="1.6"/>
<path d="M1194 1028h12v6q0 5 -6 8q-6 -3 -6 -8z" fill="#ddd"/><path d="M1200 1028v14M1194 1034h12" stroke="#555" stroke-width="1.2"/>
<circle cx="1267" cy="1033" r="4.5" fill="#3cc03c"/>
<circle cx="1286" cy="1033" r="6.5" fill="#eee"/><text x="1283.5" y="1037" font-size="9" fill="#444" font-family="Liberation Sans">1</text>
<path d="M1312 1030L1317 1027L1322 1030V1036L1317 1039L1312 1036Z M1312 1030L1317 1033L1322 1030M1317 1033V1039" stroke="#ddd" stroke-width="1.2" fill="none"/>
<path d="M1452 1004V1016M1455 1010L1461 1004V1016ZM1460 1010L1466 1004V1016Z" fill="#ddd" stroke="#ddd" stroke-width="1.6"/>
<path d="M1478 1010L1483 1004V1016Z" fill="#ddd"/><path d="M1485 1004V1016M1488 1004V1016" stroke="#ddd" stroke-width="1.6"/>
<path d="M1500 1003L1512 1010L1500 1017Z" fill="#ddd"/><path d="M1512 1014l3 3h-3z" fill="#ddd"/>
<path d="M1521 1004V1016M1524 1004V1016" stroke="#ddd" stroke-width="1.6"/><path d="M1527 1004L1533 1010L1527 1016Z" fill="#ddd"/>
<path d="M1547 1004L1553 1010L1547 1016ZM1553 1004L1559 1010L1553 1016Z" fill="#ddd"/><path d="M1561 1004V1016" stroke="#ddd" stroke-width="1.8"/>
<path d="M1458 1031L1453 1026V1036ZM1460 1031L1465 1026V1036Z" fill="#ddd"/>
<circle cx="1552" cy="1029" r="5" fill="#ddd"/><circle cx="1558" cy="1036" r="4" fill="none" stroke="#f0a830" stroke-width="2.2"/>
<path d="M1595 1006V1034M1581 1020H1609" stroke="#e8e8e8" stroke-width="6"/><circle cx="1602" cy="1028" r="4" fill="none" stroke="#4cb8c8" stroke-width="2"/><path d="M1599 1031L1591 1039" stroke="#4cb8c8" stroke-width="2"/>
<path d="M1677 1042Q1676 1032 1680 1028M1689 1042Q1690 1032 1686 1028" stroke="#4cb8c8" stroke-width="1.8" fill="none"/><path d="M1680 1026h2v2h-2zM1684 1026h2v2h-2z" fill="#ddd"/>
<path d="M1762 1007H1770L1766 1012Z" fill="#ddd"/>
<circle cx="1802" cy="1007" r="5" fill="none" stroke="#ddd" stroke-width="2"/><path d="M1798 1011L1793 1017" stroke="#ddd" stroke-width="2.2"/>
<circle cx="1822" cy="1010" r="4" fill="none" stroke="#ddd" stroke-width="1.8"/><path d="M1819 1013L1815 1017" stroke="#ddd" stroke-width="2"/><path d="M1823 1002h4v4h-4zM1828 1002h4v4h-4zM1828 1007h4v4h-4z" fill="#4cb8c8"/>
<path d="M1839 1006v-3h3M1853 1006v-3h-3M1839 1014v3h3M1853 1014v3h-3" stroke="#ddd" stroke-width="1.4" fill="none"/><path d="M1842 1007L1846 1005L1850 1007V1012L1846 1014L1842 1012Z" fill="#4cb8c8"/>
<path d="M1866 1004L1872 1001V1010L1866 1013Z" fill="#4cb8c8"/><path d="M1860 1010L1866 1013L1860 1016L1856 1013Z" fill="#ddd"/>
<path d="M1794 1025L1806 1031L1794 1037" stroke="#ddd" stroke-width="1.8" fill="none"/>
<path d="M1818 1040Q1814 1032 1816 1027L1818 1027L1820 1032V1024L1822 1023L1824 1031V1023L1826 1023L1827 1031V1025L1829 1025L1830 1033L1832 1030L1833 1031Q1832 1038 1826 1040Z" fill="#ddd"/>
<circle cx="1846" cy="1030" r="6" fill="#ddd"/><ellipse cx="1846" cy="1031" rx="9" ry="3" transform="rotate(-30 1846 1031)" fill="none" stroke="#ddd" stroke-width="1.3"/>
<rect x="1858" y="1023" width="16" height="16" fill="#ddd"/><rect x="1859" y="1031" width="7" height="7" fill="#444"/><path d="M1863 1034L1872 1025M1867 1025h5v5" stroke="#444" stroke-width="1.6" fill="none"/>
</svg>

<div id="uvw" class="a" style="left:1066px;top:474px;width:585px;height:474px;background:#444;overflow:hidden">
<div class="a" style="left:0;top:0;width:585px;height:48px;background:#fff"></div>
<div class="t" style="left:28px;top:6px;font-size:12.5px;color:#9a9a9a">Edit UVWs</div>
<div class="a" style="left:467px;top:13px;width:11px;height:1px;background:#777"></div>
<div class="a" style="left:513px;top:8px;width:11px;height:11px;border:1px solid #666"></div>
<svg class="a" style="left:556px;top:7px" width="13" height="13"><path d="M1 1L12 12M12 1L1 12" stroke="#777" stroke-width="1.2"/></svg>
<div class="t" style="left:7px;top:31px;font-size:12px;color:#707070;word-spacing:0">File</div>
<div class="t" style="left:38px;top:31px;font-size:12px;color:#707070">Edit</div>
<div class="t" style="left:71px;top:31px;font-size:12px;color:#707070">Select</div>
<div class="t" style="left:115px;top:31px;font-size:12px;color:#707070">Tools</div>
<div class="t" style="left:156px;top:31px;font-size:12px;color:#707070">Mapping</div>
<div class="t" style="left:216px;top:31px;font-size:12px;color:#707070">Options</div>
<div class="t" style="left:270px;top:31px;font-size:12px;color:#707070">Display</div>
<div class="t" style="left:321px;top:31px;font-size:12px;color:#707070">View</div>
<div class="a" style="left:0;top:48px;width:585px;height:29px;background:#3b3b3b"></div>
<div class="a" style="left:0;top:48px;width:147px;height:29px;background:#474747"></div>
<div class="a" style="left:324px;top:48px;width:261px;height:29px;background:#474747"></div>
<div class="a" style="left:0;top:77px;width:416px;height:338px;background:#777"></div>
<div class="a" style="left:0;top:77px;width:3px;height:338px;background:#111"></div>
<div class="a" style="left:415px;top:77px;width:170px;height:338px;background:#3c3c3c"></div>
<div class="a" style="left:434px;top:57px;width:143px;height:19px;background:#575757"></div>
<div class="t" style="left:438px;top:60px;font-size:11px;color:#bdbdbd;letter-spacing:-0.3px">CheckerPatt...( Checker )</div>
<div class="a" style="left:0;top:415px;width:585px;height:59px;background:#444;border-top:1px solid #2e2e2e"></div>
<div class="a" style="left:0;top:444px;width:585px;height:1px;background:#303030"></div>
<div class="ro" style="left:419px;top:78px;width:154px;height:86px"></div>
<div class="rh" style="left:438px;top:81px">Quick Transform</div>
<div class="ib" style="left:423px;top:112px;width:27px;height:27px;background:#3d3d3d"></div>
<div class="ib" style="left:452px;top:100px;width:81px;height:26px;background:#3d3d3d"></div>
<div class="ib" style="left:452px;top:128px;width:81px;height:28px;background:#3d3d3d"></div>
<div class="ib" style="left:541px;top:100px;width:26px;height:26px;background:#414141"></div>
<div class="ib" style="left:541px;top:128px;width:26px;height:28px;background:#414141"></div>
<div class="ro" style="left:419px;top:167px;width:154px;height:138px"></div>
<div class="rh" style="left:438px;top:170px">Brush</div>
<div class="ib" style="left:456px;top:203px;width:27px;height:25px;background:#3d3d3d"></div>
<div class="ib" style="left:502px;top:203px;width:27px;height:25px;background:#3d3d3d"></div>
<div class="ib" style="left:427px;top:258px;width:26px;height:25px;background:#3d3d3d"></div>
<div class="lb" style="left:471px;top:250px;color:#d8d8d8">Strength:</div>
<div class="fld" style="left:520px;top:248px;width:47px;height:14px;background:#555"></div>
<div class="lb" style="left:523px;top:249px;color:#bbb">10.0</div>
<div class="lb" style="left:483px;top:276px;color:#d8d8d8">Falloff:</div>
<div class="fld" style="left:520px;top:275px;width:47px;height:14px;background:#555"></div>
<div class="lb" style="left:523px;top:276px;color:#bbb">20.0</div>
<div class="ro" style="left:419px;top:310px;width:154px;height:55px"></div>
<div class="rh" style="left:438px;top:313px">Reshape Elements</div>
<div class="ib" style="left:450px;top:330px;width:79px;height:26px;background:#3d3d3d"></div>
<div class="ro" style="left:419px;top:370px;width:154px;height:50px"></div>
<div class="rh" style="left:438px;top:373px">Stitch</div>
<div class="a" style="left:577px;top:78px;width:7px;height:337px;background:#333"></div>
<div class="a" style="left:577px;top:78px;width:7px;height:150px;background:#4a4a4a"></div>
<div class="a" style="left:0;top:416px;width:585px;height:28px;background:#444"></div>
<div class="a" style="left:0;top:445px;width:585px;height:29px;background:#444"></div>
<div class="fld" style="left:396px;top:422px;width:48px;height:16px;background:#555"></div>
<div class="lb" style="left:399px;top:424px;color:#bbb">0.0</div>
<div class="fld" style="left:544px;top:422px;width:33px;height:16px;background:#555"></div>
<div class="lb" style="left:548px;top:424px;color:#ccc">16</div>
<div class="lb" style="left:35px;top:454px;color:#d8d8d8;font-weight:bold">U:</div>
<div class="fld" style="left:56px;top:452px;width:32px;height:15px;background:#555"></div>
<div class="lb" style="left:104px;top:454px;color:#d8d8d8;font-weight:bold">V:</div>
<div class="fld" style="left:124px;top:452px;width:32px;height:15px;background:#555"></div>
<div class="lb" style="left:172px;top:454px;color:#d8d8d8;font-weight:bold">W</div>
<div class="fld" style="left:314px;top:452px;width:132px;height:19px;background:#555"></div>
<div class="lb" style="left:318px;top:456px;color:#ccc">All IDs</div>
</div>
<svg class="a" style="left:1066px;top:551px" width="416" height="338" viewBox="1066 551 416 338">
<path d="M1152.5 551V889M1066 834.5H1482" stroke="#404040" stroke-width="3"/>
<rect x="1152.5" y="590.5" width="245.0" height="244.0" fill="#7a7a7a"/>
<path d="M1152.5 605.8H1397.5M1152.5 621.0H1397.5M1152.5 636.2H1397.5M1152.5 651.5H1397.5M1152.5 666.8H1397.5M1152.5 682.0H1397.5M1152.5 697.2H1397.5M1152.5 712.5H1397.5M1152.5 727.8H1397.5M1152.5 743.0H1397.5M1152.5 758.2H1397.5M1152.5 773.5H1397.5M1152.5 788.8H1397.5M1152.5 804.0H1397.5M1152.5 819.2H1397.5M1152.5 605.8V819.2M1160.2 605.8V819.2M1167.8 605.8V819.2M1175.5 605.8V819.2M1183.1 605.8V819.2M1190.8 605.8V819.2M1198.4 605.8V819.2M1206.1 605.8V819.2M1213.8 605.8V819.2M1221.4 605.8V819.2M1229.1 605.8V819.2M1236.7 605.8V819.2M1244.4 605.8V819.2M1252.0 605.8V819.2M1259.7 605.8V819.2M1267.3 605.8V819.2M1275.0 605.8V819.2M1282.7 605.8V819.2M1290.3 605.8V819.2M1298.0 605.8V819.2M1305.6 605.8V819.2M1313.3 605.8V819.2M1320.9 605.8V819.2M1328.6 605.8V819.2M1336.2 605.8V819.2M1343.9 605.8V819.2M1351.6 605.8V819.2M1359.2 605.8V819.2M1366.9 605.8V819.2M1374.5 605.8V819.2M1382.2 605.8V819.2M1389.8 605.8V819.2M1397.5 605.8V819.2" stroke="#f2f2f2" stroke-width="1.3" fill="none"/>
<path d="M1152.5 590.5V605.8M1152.5 590.5L1160.2 605.8M1152.5 819.2V834.5M1152.5 834.5L1160.2 819.2M1160.2 590.5V605.8M1160.2 590.5L1167.8 605.8M1160.2 819.2V834.5M1160.2 834.5L1167.8 819.2M1167.8 590.5V605.8M1167.8 590.5L1175.5 605.8M1167.8 819.2V834.5M1167.8 834.5L1175.5 819.2M1175.5 590.5V605.8M1175.5 590.5L1183.1 605.8M1175.5 819.2V834.5M1175.5 834.5L1183.1 819.2M1183.1 590.5V605.8M1183.1 590.5L1190.8 605.8M1183.1 819.2V834.5M1183.1 834.5L1190.8 819.2M1190.8 590.5V605.8M1190.8 590.5L1198.4 605.8M1190.8 819.2V834.5M1190.8 834.5L1198.4 819.2M1198.4 590.5V605.8M1198.4 590.5L1206.1 605.8M1198.4 819.2V834.5M1198.4 834.5L1206.1 819.2M1206.1 590.5V605.8M1206.1 590.5L1213.8 605.8M1206.1 819.2V834.5M1206.1 834.5L1213.8 819.2M1213.8 590.5V605.8M1213.8 590.5L1221.4 605.8M1213.8 819.2V834.5M1213.8 834.5L1221.4 819.2M1221.4 590.5V605.8M1221.4 590.5L1229.1 605.8M1221.4 819.2V834.5M1221.4 834.5L1229.1 819.2M1229.1 590.5V605.8M1229.1 590.5L1236.7 605.8M1229.1 819.2V834.5M1229.1 834.5L1236.7 819.2M1236.7 590.5V605.8M1236.7 590.5L1244.4 605.8M1236.7 819.2V834.5M1236.7 834.5L1244.4 819.2M1244.4 590.5V605.8M1244.4 590.5L1252.0 605.8M1244.4 819.2V834.5M1244.4 834.5L1252.0 819.2M1252.0 590.5V605.8M1252.0 590.5L1259.7 605.8M1252.0 819.2V834.5M1252.0 834.5L1259.7 819.2M1259.7 590.5V605.8M1259.7 590.5L1267.3 605.8M1259.7 819.2V834.5M1259.7 834.5L1267.3 819.2M1267.3 590.5V605.8M1267.3 590.5L1275.0 605.8M1267.3 819.2V834.5M1267.3 834.5L1275.0 819.2M1275.0 590.5V605.8M1275.0 590.5L1282.7 605.8M1275.0 819.2V834.5M1275.0 834.5L1282.7 819.2M1282.7 590.5V605.8M1282.7 590.5L1290.3 605.8M1282.7 819.2V834.5M1282.7 834.5L1290.3 819.2M1290.3 590.5V605.8M1290.3 590.5L1298.0 605.8M1290.3 819.2V834.5M1290.3 834.5L1298.0 819.2M1298.0 590.5V605.8M1298.0 590.5L1305.6 605.8M1298.0 819.2V834.5M1298.0 834.5L1305.6 819.2M1305.6 590.5V605.8M1305.6 590.5L1313.3 605.8M1305.6 819.2V834.5M1305.6 834.5L1313.3 819.2M1313.3 590.5V605.8M1313.3 590.5L1320.9 605.8M1313.3 819.2V834.5M1313.3 834.5L1320.9 819.2M1320.9 590.5V605.8M1320.9 590.5L1328.6 605.8M1320.9 819.2V834.5M1320.9 834.5L1328.6 819.2M1328.6 590.5V605.8M1328.6 590.5L1336.2 605.8M1328.6 819.2V834.5M1328.6 834.5L1336.2 819.2M1336.2 590.5V605.8M1336.2 590.5L1343.9 605.8M1336.2 819.2V834.5M1336.2 834.5L1343.9 819.2M1343.9 590.5V605.8M1343.9 590.5L1351.6 605.8M1343.9 819.2V834.5M1343.9 834.5L1351.6 819.2M1351.6 590.5V605.8M1351.6 590.5L1359.2 605.8M1351.6 819.2V834.5M1351.6 834.5L1359.2 819.2M1359.2 590.5V605.8M1359.2 590.5L1366.9 605.8M1359.2 819.2V834.5M1359.2 834.5L1366.9 819.2M1366.9 590.5V605.8M1366.9 590.5L1374.5 605.8M1366.9 819.2V834.5M1366.9 834.5L1374.5 819.2M1374.5 590.5V605.8M1374.5 590.5L1382.2 605.8M1374.5 819.2V834.5M1374.5 834.5L1382.2 819.2M1382.2 590.5V605.8M1382.2 590.5L1389.8 605.8M1382.2 819.2V834.5M1382.2 834.5L1389.8 819.2M1389.8 590.5V605.8M1389.8 590.5L1397.5 605.8M1389.8 819.2V834.5M1389.8 834.5L1397.5 819.2M1397.5 590.5V834.5M1152.5 590.5V834.5" stroke="#62cc4e" stroke-width="1.1" fill="none"/>
<path d="M1152.5 590.5H1397.5" stroke="#3a3a3a" stroke-width="2"/>

<g fill="none" stroke="#ff3b1d" stroke-width="8" stroke-linecap="round" stroke-linejoin="round">
<path d="M1172 621V801M1151 780L1173 801L1197 786"/>
<path d="M1245 621V801M1223 780L1246 801L1269 786"/>
<path d="M1318 621V801M1296 780L1319 801L1341 786"/>
<path d="M1390 621V801M1368 779L1391 801L1414 787"/>
</g>
<circle cx="1291" cy="628" r="29" fill="#dccf1e" opacity="0.6"/>
<path d="M1292.5 628V677L1304 667L1313 683L1320 680L1312 663L1326 663Z" fill="#fff" stroke="#000" stroke-width="2.2" stroke-linejoin="miter"/>
</svg>
<svg class="a" style="left:1066px;top:474px" width="585" height="474" viewBox="1066 474 585 474">
<defs>
<path id="ct" d="M0 3L3 0V3Z" fill="#ddd"/>
</defs>
<!-- title icon -->
<rect x="1075" y="480" width="13" height="15" rx="2" fill="#3a8fc2"/>
<text x="1078.5" y="490" font-size="8" font-weight="bold" fill="#fff" font-family="Liberation Sans">3</text>
<!-- top toolbar -->
<path d="M1080 531L1084 535H1082V537H1084V535L1088 539L1084 543V541H1082V543H1084L1080 547L1076 543H1078V541H1076V543L1072 539L1076 535V537H1078V535H1076Z" fill="#dcdcdc"/>
<path d="M1113 534A7 7 0 1 0 1114 544" fill="none" stroke="#e0e0e0" stroke-width="2.4"/><path d="M1109 531L1116 530L1115 537Z" fill="#e0e0e0"/>
<rect x="1125" y="531" width="17" height="16" fill="none" stroke="#4cb8c8" stroke-width="1.8" stroke-dasharray="3 2"/><rect x="1124" y="539" width="8" height="8" fill="#dcdcdc"/>
<rect x="1150" y="528" width="25" height="23" rx="2" fill="#5e8fd8"/>
<rect x="1154" y="532" width="17" height="15" fill="none" stroke="#e0e0e0" stroke-width="1.4"/>
<circle cx="1162.5" cy="539.5" r="4" fill="none" stroke="#e0e0e0" stroke-width="1.4"/><path d="M1160 539.5h5M1162.5 537v5" stroke="#e0e0e0" stroke-width="1.2"/>
<path d="M1180 534V544" stroke="#c89040" stroke-width="1.5"/>
<path d="M1188 532L1193 535V545L1188 542Z" fill="#dcdcdc"/><path d="M1196 531V549" stroke="#dcdcdc" stroke-width="1.4" stroke-dasharray="2 1.5"/><path d="M1205 532L1200 535V545L1205 542Z" fill="#4cb8c8"/>
<path d="M1392 531h3v3h-3zM1398 534h3v3h-3zM1392 537h3v3h-3zM1404 531h3v3h-3zM1410 534h3v3h-3zM1404 537h3v3h-3zM1392 543h3v3h-3zM1398 546h3v3h-3zM1404 543h3v3h-3zM1410 546h3v3h-3z" fill="#e0e0e0"/>
<rect x="1422" y="531" width="20" height="18" fill="#dcdcdc"/><rect x="1423" y="536" width="13" height="12" fill="#4cb8c8"/><path d="M1425 538h3v3h-3zM1431 538h3v3h-3zM1428 541h3v3h-3zM1425 544h3v3h-3zM1431 544h3v3h-3z" fill="#333"/>
<text x="1449" y="545" font-size="14" font-weight="bold" fill="#d8d8d8" font-family="Liberation Sans">UV</text>
<rect x="1475" y="530" width="20" height="19" fill="#dcdcdc"/><path d="M1477 536h4v4h-4zM1481 540h4v4h-4zM1477 544h4v4h-4z" fill="#333"/><circle cx="1490" cy="543" r="5" fill="none" stroke="#f0a830" stroke-width="2.5"/>
<path d="M1629 538H1637L1633 543Z" fill="#ddd"/>
<!-- right panel -->
<path d="M1490 559H1498L1494 564Z M1490 648H1498L1494 653Z M1490 790H1498L1494 795Z M1490 850H1498L1494 855Z" fill="#a8a8a8"/>
<path d="M1622 559h9M1622 562h9M1622 565h9M1622 648h9M1622 651h9M1622 654h9M1622 790h9M1622 793h9M1622 796h9M1622 850h9M1622 853h9M1622 856h9" stroke="#777" stroke-width="1"/>
<rect x="1495" y="592" width="14" height="14" fill="#dcdcdc"/><path d="M1502 595v8M1498 599h8" stroke="#4cb8c8" stroke-width="2.2"/>
<path d="M1521 585h6M1524 582v6M1535 585h6M1538 582v6M1521 592h20" stroke="#e0e0e0" stroke-width="1.8"/><path d="M1521 594H1541" stroke="#4cb8c8" stroke-width="1.4" stroke-dasharray="2.5 1.5"/>
<path d="M1549 576V597M1554 576V597M1559 576V597" stroke="#e0e0e0" stroke-width="1.5"/><path d="M1546 576V597" stroke="#4cb8c8" stroke-width="1.4" stroke-dasharray="2.5 1.5"/>
<path d="M1577 592h6M1580 589v6" stroke="#e0e0e0" stroke-width="1.8"/><path d="M1580 584Q1586 578 1593 586" stroke="#4cb8c8" stroke-width="2.2" fill="none"/>
<path d="M1524 604V625" stroke="#4cb8c8" stroke-width="1.4" stroke-dasharray="2.5 1.5"/><path d="M1528 608h6M1531 605v6M1528 620h6M1531 617v6" stroke="#e0e0e0" stroke-width="1.8"/>
<path d="M1559 604l7 7l-7 7l-7 -7z" fill="none" stroke="#2a2a2a" stroke-width="1.4"/><path d="M1549 626h20" stroke="#2a2a2a" stroke-width="2"/>
<path d="M1589 620h6M1592 617v6" stroke="#e0e0e0" stroke-width="1.8"/><path d="M1578 614Q1582 605 1591 606" stroke="#4cb8c8" stroke-width="2.2" fill="none"/>
<path d="M1610 583h3v3h-3zM1616 590h3v3h-3zM1622 590h3v3h-3zM1610 590h3v3h-3zM1628 590h3v3h-3zM1614 607h3v3h-3zM1614 614h3v3h-3zM1614 621h3v3h-3z" fill="#2e2e2e"/>
<path d="M1527 688l6 -6M1528 682h6v6" stroke="#f0a830" stroke-width="1.8" fill="none"/><path d="M1530 697L1545 680" stroke="#dcdcdc" stroke-width="3"/><path d="M1526 700Q1530 692 1534 694Z" fill="#dcdcdc"/>
<path d="M1572 680L1580 676L1588 680V688L1580 692L1572 688Z" fill="none" stroke="#4cb8c8" stroke-width="2"/><path d="M1583 699L1592 690" stroke="#f0a830" stroke-width="2.5"/>
<path d="M1497 753L1514 736" stroke="#dcdcdc" stroke-width="2.5"/>
<path d="M1627.0 725.0h5.0l-2.5 -3.0zM1627.0 731.0h5.0l-2.5 3.0zM1627.0 752.0h5.0l-2.5 -3.0zM1627.0 758.0h5.0l-2.5 3.0z" fill="#ddd"/>
<path d="M1519 807h6v15h-6zM1525 812h14v15h-14z" fill="#dcdcdc"/><path d="M1530 812h9v15h-9z" fill="#4cb8c8"/><path d="M1530 817h9M1530 822h9" stroke="#333"/>
<path d="M1547 811L1556 806L1565 811V823L1556 828L1547 823Z" fill="#dcdcdc"/><path d="M1547 811L1556 815L1565 811M1556 815V828" stroke="#555" fill="none"/><path d="M1561 815l-3 5h3l-3 5" stroke="#4cb8c8" stroke-width="1.8" fill="none"/>
<path d="M1574 811L1583 806L1592 811V823L1583 828L1574 823Z" fill="#dcdcdc"/><path d="M1574 811L1583 815L1592 811M1583 815V828" stroke="#555" fill="none"/>
<rect x="1510" y="867" width="22" height="20" fill="#dcdcdc"/><rect x="1537" y="867" width="22" height="20" fill="#4cb8c8"/><rect x="1564" y="867" width="22" height="20" fill="#dcdcdc"/><rect x="1591" y="867" width="22" height="20" fill="#4cb8c8"/>
<path d="M1511 877h20" stroke="#333" stroke-width="1.3"/><rect x="1513" y="871" width="4" height="11" rx="2" fill="none" stroke="#333" stroke-width="1.1"/><rect x="1519" y="871" width="4" height="11" rx="2" fill="none" stroke="#333" stroke-width="1.1"/><rect x="1525" y="871" width="4" height="11" rx="2" fill="none" stroke="#333" stroke-width="1.1"/><path d="M1538 877h20" stroke="#333" stroke-width="1.3"/><rect x="1540" y="871" width="4" height="11" rx="2" fill="none" stroke="#333" stroke-width="1.1"/><rect x="1546" y="871" width="4" height="11" rx="2" fill="none" stroke="#333" stroke-width="1.1"/><rect x="1552" y="871" width="4" height="11" rx="2" fill="none" stroke="#333" stroke-width="1.1"/><path d="M1565 877h20" stroke="#333" stroke-width="1.3"/><rect x="1567" y="871" width="4" height="11" rx="2" fill="none" stroke="#333" stroke-width="1.1"/><rect x="1573" y="871" width="4" height="11" rx="2" fill="none" stroke="#333" stroke-width="1.1"/><rect x="1579" y="871" width="4" height="11" rx="2" fill="none" stroke="#333" stroke-width="1.1"/><path d="M1592 877h20" stroke="#333" stroke-width="1.3"/><rect x="1594" y="871" width="4" height="11" rx="2" fill="none" stroke="#333" stroke-width="1.1"/><rect x="1600" y="871" width="4" height="11" rx="2" fill="none" stroke="#333" stroke-width="1.1"/><rect x="1606" y="871" width="4" height="11" rx="2" fill="none" stroke="#333" stroke-width="1.1"/><circle cx="1527" cy="883" r="3.5" fill="none" stroke="#2a7f8c" stroke-width="1.5"/>
<!-- bottom toolbar row 1 -->
<path d="M1073 904h5M1075.5 901.5v5M1082 896h5M1084.5 893.5v5M1080 912h5M1082.5 909.5v5" stroke="#4cb8c8" stroke-width="1.6"/>
<path d="M1100 905L1116 897L1112 914Z" fill="none" stroke="#4cb8c8" stroke-width="2"/>
<rect x="1123" y="892" width="24" height="25" rx="2" fill="#5e8fd8"/><rect x="1126" y="895" width="18" height="19" fill="#4cb8c8"/>
<path d="M1153 898V911M1197 898V911M1430 898V911M1343 898V911M1157 899" stroke="#222" stroke-width="1.4"/>
<path d="M1161 899L1170 895L1179 899V911L1170 915L1161 911Z" fill="#4cb8c8"/><path d="M1161 899L1170 903L1179 899M1170 903V915" stroke="#2a7f8c" fill="none"/>
<rect x="1199" y="894" width="18" height="18" fill="none" stroke="#4cb8c8" stroke-width="1.6" stroke-dasharray="3 2"/><rect x="1198" y="904" width="8" height="8" fill="#dcdcdc"/><path d="M1211 896v6M1208 899h6" stroke="#dcdcdc" stroke-width="1.6"/>
<rect x="1226" y="899" width="14" height="14" fill="none" stroke="#4cb8c8" stroke-width="1.6" stroke-dasharray="3 2"/><rect x="1226" y="905" width="8" height="8" fill="#dcdcdc"/><path d="M1237 894h5" stroke="#dcdcdc" stroke-width="1.6"/>
<path d="M1250 899h20M1250 910h20M1278 899h22M1278 910h22M1305 899h22M1305 910h22" stroke="#2e2e2e" stroke-width="3"/>
<path d="M1252 904.5h16M1280 904.5h18M1307 904.5h18" stroke="#dcdcdc" stroke-width="1.8" stroke-dasharray="4 2"/>
<path d="M1289 900v10M1284 905h10M1311 905h10" stroke="#4cb8c8" stroke-width="2"/>
<path d="M1343 895V913" stroke="#dcdcdc" stroke-width="2.5"/>
<path d="M1362 894v16M1390 894v16M1416 895" stroke="#2e2e2e" stroke-width="6"/>
<path d="M1374 896V913M1368 909h10M1374 906v10" stroke="#4cb8c8" stroke-width="2.2"/><path d="M1374 896V910" stroke="#dcdcdc" stroke-width="2"/>
<path d="M1399 896V910H1410" stroke="#dcdcdc" stroke-width="2" fill="none"/><path d="M1399 912h11" stroke="#4cb8c8" stroke-width="2"/>
<path d="M1417 913L1428 900" stroke="#dcdcdc" stroke-width="2.5"/>
<circle cx="1444" cy="905" r="9" fill="none" stroke="#4cb8c8" stroke-width="1.6" stroke-dasharray="3 2"/><circle cx="1444" cy="905" r="4" fill="none" stroke="#2e2e2e" stroke-width="1.5"/>
<path d="M1498.0 903.0h5.0l-2.5 -3.0zM1498.0 908.0h5.0l-2.5 3.0zM1632.0 903.0h5.0l-2.5 -3.0zM1632.0 908.0h5.0l-2.5 3.0z" fill="#ddd"/>
<path d="M1518 914Q1534 910 1537 894" stroke="#dcdcdc" stroke-width="2.5" fill="none"/>
<text x="1545" y="912" font-size="15" font-weight="bold" fill="#dcdcdc" font-family="Liberation Sans">XY</text>
<path d="M1574 900V910" stroke="#aaa" stroke-width="1.4"/>
<rect x="1580" y="892" width="26" height="26" rx="2" fill="#5e8fd8"/><circle cx="1593" cy="905" r="9" fill="none" stroke="#dcdcdc" stroke-width="1.6" stroke-dasharray="3 2"/><path d="M1586 905h14M1588 901v8M1593 901v8M1598 901v8" stroke="#4cb8c8" stroke-width="1.6"/>
<!-- bottom row 2 -->
<rect x="1068" y="921" width="25" height="25" rx="2" fill="#5e8fd8"/>
<path d="M1075 928v14M1071 938l4 5l4 -5M1075 928h12M1084 924l4 4l-4 4" stroke="#e8e8e8" stroke-width="2" fill="none"/><circle cx="1075" cy="928" r="3" fill="#e8e8e8"/>
<path d="M1098 928V941M1248 928V941M1310 928V941M1372 928V941" stroke="#aaa" stroke-width="1.4"/>
<path d="M1257 934h15v11h-15z" fill="#dcdcdc"/><path d="M1260 934V930A4.5 4.5 0 0 1 1269 930V934" stroke="#dcdcdc" stroke-width="2" fill="none"/><circle cx="1264.5" cy="939" r="1.8" fill="#333"/>
<path d="M1283 944L1297 929V944Z" fill="#dcdcdc"/><path d="M1287 940Q1292 934 1299 940Q1292 946 1287 940Z" fill="#f0a830"/>
<path d="M1318 936Q1327 928 1337 936Q1327 944 1318 936Z" fill="#2e2e2e"/>
<path d="M1355 925V946M1345 935.5H1365M1348 928L1362 943M1362 928L1348 943" stroke="#e0e0e0" stroke-width="1.6"/>
<path d="M1498 935H1506L1502 940Z" fill="#ddd"/>
<path d="M1520 946Q1517 936 1519 930L1521 930L1523 937V926L1525 925L1527 936V925L1529 925L1530 936V927L1532 927L1533 937L1535 933L1536 934Q1535 942 1529 946Z" fill="#e0e0e0"/>
<circle cx="1557" cy="931" r="6" fill="none" stroke="#e0e0e0" stroke-width="2"/><path d="M1552 936L1545 944" stroke="#e0e0e0" stroke-width="2.5"/>
<rect x="1572" y="925" width="17" height="14" fill="none" stroke="#e0e0e0" stroke-width="1.4" stroke-dasharray="3 2"/><circle cx="1578" cy="938" r="4" fill="none" stroke="#4cb8c8" stroke-width="1.6"/><path d="M1575 941L1571 946" stroke="#4cb8c8" stroke-width="2"/>
<path d="M1599 931L1608 926L1617 931V941L1608 946L1599 941Z" fill="none" stroke="#e0e0e0" stroke-width="1.4"/><path d="M1599 931L1608 935L1617 931M1608 935V946" stroke="#e0e0e0" fill="none"/>
<path d="M1629 942Q1625 934 1632 929Q1640 925 1644 932Q1646 938 1638 944" stroke="#e0e0e0" stroke-width="2.5" fill="none"/>
</svg>

</body></html>
